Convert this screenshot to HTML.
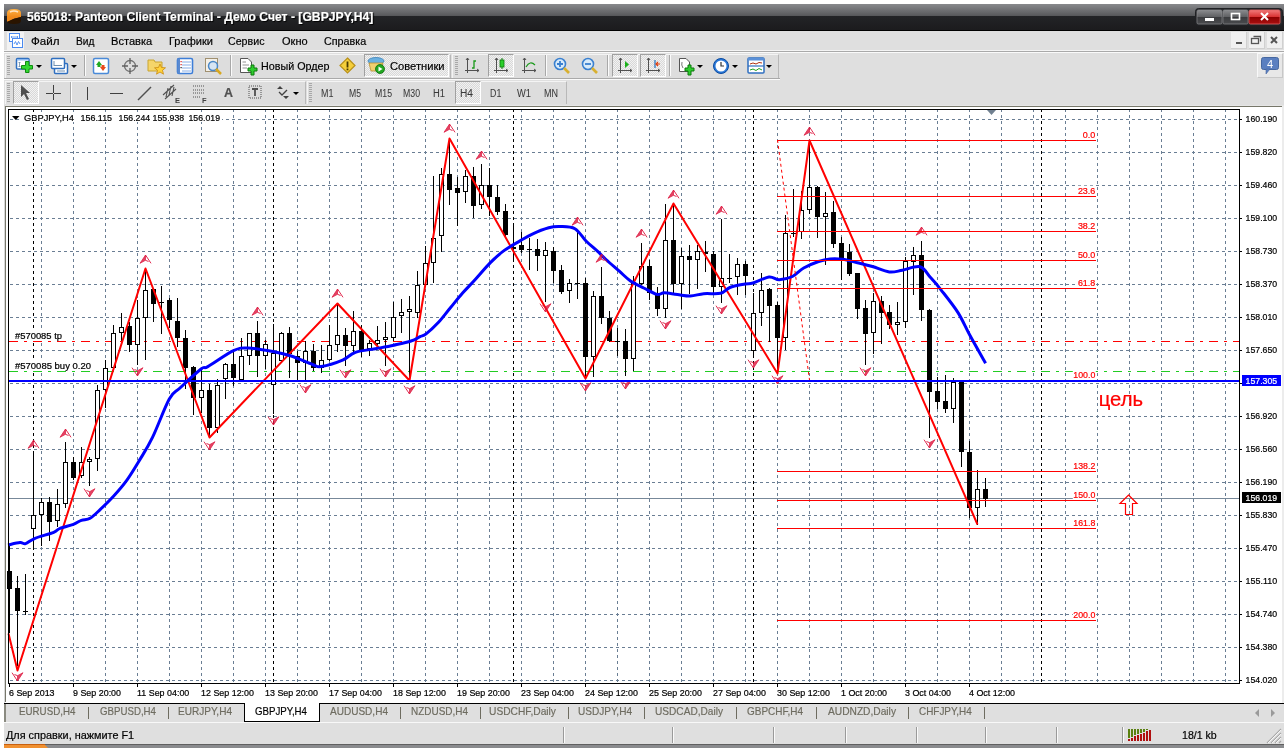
<!DOCTYPE html><html><head><meta charset="utf-8"><style>
*{margin:0;padding:0;box-sizing:border-box}
html,body{width:1288px;height:748px;overflow:hidden;background:#fff;font-family:"Liberation Sans", sans-serif;}
.a{position:absolute}
.t{position:absolute;white-space:nowrap;font-size:11px;line-height:12px;color:#000;-webkit-text-stroke:0.2px currentColor}
#w{position:absolute;left:0;top:0;width:1288px;height:748px;overflow:hidden;will-change:transform;background:#fff}
.chk{background-color:#f2f2f2;background-image:linear-gradient(45deg,#d8d8d8 25%,transparent 25%,transparent 75%,#d8d8d8 75%),linear-gradient(45deg,#d8d8d8 25%,transparent 25%,transparent 75%,#d8d8d8 75%);background-size:2px 2px;background-position:0 0,1px 1px;border-top:1px solid #a0a0a0;border-left:1px solid #a0a0a0;border-right:1px solid #fff;border-bottom:1px solid #fff}
</style></head><body><div id="w"><div class="a" style="left:4px;top:4px;width:1280px;height:27px;background:linear-gradient(to bottom,#88898c 0px,#7c7d80 3px,#5b5c5f 11px,#555659 12px,#232427 12px,#1c1c1e 25px,#1c1c1e 26px,#000 26px,#000 27px)"></div>
<svg class="a" style="left:6px;top:8px" width="17" height="17" viewBox="0 0 17 17"><defs><linearGradient id="ai" x1="0" y1="0" x2="0" y2="1"><stop offset="0" stop-color="#ffb347"/><stop offset="0.6" stop-color="#f08a1c"/></linearGradient></defs>
<path d="M1,5 Q1,1 8,1 Q15,1 15,5 L15,9 Q8,10 1,14 Z" fill="url(#ai)"/>
<path d="M1,14 Q8,10 15,9 L15,13 Q15,16 8,16 Q1,16 1,13 Z" fill="#2a1400"/>
<path d="M4,4 Q8,2 12,4" stroke="#fff" stroke-opacity="0.7" stroke-width="1.5" fill="none"/></svg>
<div class="t" style="left:27px;top:11.36px;font-size:12.8px;line-height:12.8px;color:#fff;font-weight:bold;transform:scaleX(0.9508);transform-origin:0 0;text-shadow:1px 1px 1px #000;-webkit-text-stroke:0.2px #fff">565018: Panteon Client Terminal - Демо Счет - [GBPJPY,H4]</div>
<svg class="a" style="left:1195px;top:8px" width="88" height="18" viewBox="0 0 88 18"><defs>
<linearGradient id="bg1" x1="0" y1="0" x2="0" y2="1"><stop offset="0" stop-color="#8a8b8e"/><stop offset="0.5" stop-color="#5e5f62"/><stop offset="0.5" stop-color="#3a3b3e"/><stop offset="1" stop-color="#4a4b4e"/></linearGradient>
<linearGradient id="bg2" x1="0" y1="0" x2="0" y2="1"><stop offset="0" stop-color="#f07a7a"/><stop offset="0.5" stop-color="#d83030"/><stop offset="0.5" stop-color="#8c0000"/><stop offset="1" stop-color="#a81010"/></linearGradient></defs>
<rect x="0.5" y="0.5" width="87" height="17" rx="3" fill="#2a2b2e" stroke="#202124"/>
<rect x="2" y="2" width="25" height="14" rx="1.5" fill="url(#bg1)" stroke="#909194" stroke-opacity="0.6"/>
<rect x="28" y="2" width="25" height="14" rx="1.5" fill="url(#bg1)" stroke="#909194" stroke-opacity="0.6"/>
<rect x="54" y="2" width="31" height="14" rx="1.5" fill="url(#bg2)" stroke="#e06060" stroke-opacity="0.8"/>
<rect x="10" y="10" width="9" height="3" fill="#fff"/>
<rect x="36.5" y="5.5" width="8" height="6" fill="none" stroke="#fff" stroke-width="1.6"/>
<path d="M66,5 L73,12 M73,5 L66,12" stroke="#fff" stroke-width="2"/></svg>
<div class="a" style="left:4px;top:31px;width:1280px;height:19px;background:#dfdfdf"></div>
<div class="a" style="left:4px;top:50px;width:1280px;height:1px;background:#f4f4f4"></div>
<div class="a" style="left:4px;top:51px;width:1280px;height:1px;background:#a9a9a9"></div>
<div class="a" style="left:4px;top:52px;width:1280px;height:1px;background:#fafafa"></div>
<svg class="a" style="left:7px;top:32px" width="17" height="18" viewBox="0 0 17 18"><rect x="0" y="0" width="17" height="18" fill="#f2f2f2"/>
<rect x="2.5" y="1.5" width="10" height="8" fill="#fff" stroke="#4a8af0"/>
<path d="M4,5 L11,5 M5,4 L4,5 L5,6 M10,4 L11,5 L10,6" stroke="#4a8af0" fill="none" stroke-width="0.8"/>
<rect x="5.5" y="6.5" width="10" height="9" fill="#fff" stroke="#4a8af0"/>
<path d="M7,12 L8.5,9.5 L10,13 L11.5,9.5 L13,12" stroke="#4a8af0" fill="none" stroke-width="0.9"/></svg>
<div class="t" style="left:31px;top:34.98px;font-size:11.6px;line-height:11.6px;color:#000;font-weight:normal;transform:scaleX(0.9993);transform-origin:0 0;">Файл</div>
<div class="t" style="left:75.6px;top:34.98px;font-size:11.6px;line-height:11.6px;color:#000;font-weight:normal;transform:scaleX(0.8768);transform-origin:0 0;">Вид</div>
<div class="t" style="left:110.6px;top:34.98px;font-size:11.6px;line-height:11.6px;color:#000;font-weight:normal;transform:scaleX(0.9579);transform-origin:0 0;">Вставка</div>
<div class="t" style="left:168.5px;top:34.98px;font-size:11.6px;line-height:11.6px;color:#000;font-weight:normal;transform:scaleX(0.9520);transform-origin:0 0;">Графики</div>
<div class="t" style="left:228.4px;top:34.98px;font-size:11.6px;line-height:11.6px;color:#000;font-weight:normal;transform:scaleX(0.9189);transform-origin:0 0;">Сервис</div>
<div class="t" style="left:281.5px;top:34.98px;font-size:11.6px;line-height:11.6px;color:#000;font-weight:normal;transform:scaleX(0.9497);transform-origin:0 0;">Окно</div>
<div class="t" style="left:323.8px;top:34.98px;font-size:11.6px;line-height:11.6px;color:#000;font-weight:normal;transform:scaleX(0.9296);transform-origin:0 0;">Справка</div>
<div class="a" style="left:1231px;top:32px;width:16px;height:17px;background:#f0f0f0;border-right:1px solid #d0d0d0;border-bottom:1px solid #d0d0d0"></div>
<div class="a" style="left:1249px;top:32px;width:16px;height:17px;background:#f0f0f0;border-right:1px solid #d0d0d0;border-bottom:1px solid #d0d0d0"></div>
<div class="a" style="left:1267px;top:32px;width:16px;height:17px;background:#f0f0f0;border-right:1px solid #d0d0d0;border-bottom:1px solid #d0d0d0"></div>
<svg class="a" style="left:1231px;top:32px" width="54" height="17" viewBox="0 0 54 17"><rect x="5" y="10" width="6" height="2" fill="#555"/>
<rect x="20.5" y="6.5" width="7" height="5" fill="none" stroke="#555" stroke-width="1.3"/>
<path d="M22.5,4.5 L29.5,4.5 L29.5,9.5" fill="none" stroke="#555" stroke-width="1.3"/>
<path d="M40,5 L46,11 M46,5 L40,11" stroke="#555" stroke-width="2"/></svg>
<div class="a" style="left:4px;top:53px;width:1280px;height:52px;background:#dfdfdf"></div>
<div class="a" style="left:4px;top:78px;width:776px;height:1px;background:#a9a9a9"></div>
<div class="a" style="left:4px;top:79px;width:776px;height:1px;background:#fafafa"></div>
<div class="a" style="left:4px;top:80px;width:1280px;height:25px;background:#dfdfdf"></div>
<div class="a" style="left:4px;top:105px;width:1280px;height:1px;background:#8a8a8a"></div>
<div class="a" style="left:5px;top:54px;width:446px;height:24px;background:#dddddd;border-top:1px solid #f4f4f4;border-left:1px solid #f4f4f4;border-right:1px solid #b8b8b8"></div>
<div class="a" style="left:452px;top:54px;width:327px;height:24px;background:#dddddd;border-top:1px solid #f4f4f4;border-left:1px solid #f4f4f4;border-right:1px solid #b8b8b8"></div>
<div class="a" style="left:5px;top:81px;width:301px;height:23px;background:#dddddd;border-top:1px solid #f4f4f4;border-left:1px solid #f4f4f4;border-right:1px solid #b8b8b8"></div>
<div class="a" style="left:307px;top:81px;width:260px;height:23px;background:#dddddd;border-top:1px solid #f4f4f4;border-left:1px solid #f4f4f4;border-right:1px solid #b8b8b8"></div>
<div class="a" style="left:1257px;top:53px;width:26px;height:25px;background:#e8e8e8;border:1px solid #f8f8f8;border-right-color:#c8c8c8;border-bottom-color:#c8c8c8"></div>
<svg class="a" style="left:7px;top:56px" width="3" height="20" viewBox="0 0 3 20"><rect x="0" y="0" width="3" height="1" fill="#a8a8a8"/><rect x="0" y="2" width="3" height="1" fill="#a8a8a8"/><rect x="0" y="4" width="3" height="1" fill="#a8a8a8"/><rect x="0" y="6" width="3" height="1" fill="#a8a8a8"/><rect x="0" y="8" width="3" height="1" fill="#a8a8a8"/><rect x="0" y="10" width="3" height="1" fill="#a8a8a8"/><rect x="0" y="12" width="3" height="1" fill="#a8a8a8"/><rect x="0" y="14" width="3" height="1" fill="#a8a8a8"/><rect x="0" y="16" width="3" height="1" fill="#a8a8a8"/><rect x="0" y="18" width="3" height="1" fill="#a8a8a8"/></svg>
<svg class="a" style="left:455px;top:56px" width="3" height="20" viewBox="0 0 3 20"><rect x="0" y="0" width="3" height="1" fill="#a8a8a8"/><rect x="0" y="2" width="3" height="1" fill="#a8a8a8"/><rect x="0" y="4" width="3" height="1" fill="#a8a8a8"/><rect x="0" y="6" width="3" height="1" fill="#a8a8a8"/><rect x="0" y="8" width="3" height="1" fill="#a8a8a8"/><rect x="0" y="10" width="3" height="1" fill="#a8a8a8"/><rect x="0" y="12" width="3" height="1" fill="#a8a8a8"/><rect x="0" y="14" width="3" height="1" fill="#a8a8a8"/><rect x="0" y="16" width="3" height="1" fill="#a8a8a8"/><rect x="0" y="18" width="3" height="1" fill="#a8a8a8"/></svg>
<svg class="a" style="left:7px;top:83px" width="3" height="20" viewBox="0 0 3 20"><rect x="0" y="0" width="3" height="1" fill="#a8a8a8"/><rect x="0" y="2" width="3" height="1" fill="#a8a8a8"/><rect x="0" y="4" width="3" height="1" fill="#a8a8a8"/><rect x="0" y="6" width="3" height="1" fill="#a8a8a8"/><rect x="0" y="8" width="3" height="1" fill="#a8a8a8"/><rect x="0" y="10" width="3" height="1" fill="#a8a8a8"/><rect x="0" y="12" width="3" height="1" fill="#a8a8a8"/><rect x="0" y="14" width="3" height="1" fill="#a8a8a8"/><rect x="0" y="16" width="3" height="1" fill="#a8a8a8"/><rect x="0" y="18" width="3" height="1" fill="#a8a8a8"/></svg>
<svg class="a" style="left:309px;top:83px" width="3" height="20" viewBox="0 0 3 20"><rect x="0" y="0" width="3" height="1" fill="#a8a8a8"/><rect x="0" y="2" width="3" height="1" fill="#a8a8a8"/><rect x="0" y="4" width="3" height="1" fill="#a8a8a8"/><rect x="0" y="6" width="3" height="1" fill="#a8a8a8"/><rect x="0" y="8" width="3" height="1" fill="#a8a8a8"/><rect x="0" y="10" width="3" height="1" fill="#a8a8a8"/><rect x="0" y="12" width="3" height="1" fill="#a8a8a8"/><rect x="0" y="14" width="3" height="1" fill="#a8a8a8"/><rect x="0" y="16" width="3" height="1" fill="#a8a8a8"/><rect x="0" y="18" width="3" height="1" fill="#a8a8a8"/></svg>
<div class="a" style="left:84px;top:55px;width:1px;height:21px;background:#a8a8a8"></div>
<div class="a" style="left:85px;top:55px;width:1px;height:21px;background:#fbfbfb"></div>
<div class="a" style="left:230px;top:55px;width:1px;height:21px;background:#a8a8a8"></div>
<div class="a" style="left:231px;top:55px;width:1px;height:21px;background:#fbfbfb"></div>
<div class="a" style="left:545px;top:55px;width:1px;height:21px;background:#a8a8a8"></div>
<div class="a" style="left:546px;top:55px;width:1px;height:21px;background:#fbfbfb"></div>
<div class="a" style="left:607px;top:55px;width:1px;height:21px;background:#a8a8a8"></div>
<div class="a" style="left:608px;top:55px;width:1px;height:21px;background:#fbfbfb"></div>
<div class="a" style="left:669px;top:55px;width:1px;height:21px;background:#a8a8a8"></div>
<div class="a" style="left:670px;top:55px;width:1px;height:21px;background:#fbfbfb"></div>
<div class="a" style="left:70px;top:82px;width:1px;height:21px;background:#a8a8a8"></div>
<div class="a" style="left:71px;top:82px;width:1px;height:21px;background:#fbfbfb"></div>
<div class="a" style="left:364px;top:54px;width:85px;height:23px;"></div>
<div class="a chk" style="left:364px;top:54px;width:85px;height:23px"></div>
<div class="a chk" style="left:488px;top:54px;width:26px;height:23px"></div>
<div class="a chk" style="left:612px;top:54px;width:26px;height:23px"></div>
<div class="a chk" style="left:640px;top:54px;width:26px;height:23px"></div>
<div class="a chk" style="left:13px;top:81px;width:26px;height:23px"></div>
<div class="a chk" style="left:455px;top:81px;width:26px;height:23px"></div>
<svg class="a" style="left:15px;top:57px" width="20" height="18" viewBox="0 0 20 18"><rect x="1.5" y="1.5" width="12.5" height="10.5" rx="1" fill="#fff" stroke="#2f6fc0" stroke-width="1.5"/>
<rect x="2" y="2" width="11.5" height="1.5" fill="#8ab8f0"/>
<path d="M4.5,5 L4.5,10 M3.5,6 L4.5,5 L5.5,6 M3.5,9 L4.5,10 L5.5,9" stroke="#6a8aaa" fill="none" stroke-width="0.8"/>
<path d="M10.5,4.5 L14,4.5 L14,8.5 L17.5,8.5 L17.5,12 L14,12 L14,15.5 L10.5,15.5 L10.5,12 L6.5,12 L6.5,8.5 L10.5,8.5 Z" fill="#30d830" stroke="#108a10" stroke-width="1"/></svg>
<svg class="a" style="left:36px;top:65px" width="6" height="4" viewBox="0 0 6 4"><path d="M0,0 L6,0 L3,3 Z" fill="#000"/></svg>
<svg class="a" style="left:50px;top:57px" width="20" height="18" viewBox="0 0 20 18"><rect x="4.5" y="6.5" width="13" height="10" rx="1" fill="#fff" stroke="#2f6fc0" stroke-width="1.5"/>
<rect x="1.5" y="1.5" width="13" height="10" rx="1" fill="#fff" stroke="#2f6fc0" stroke-width="1.5"/>
<path d="M4,8.5 L12,8.5 M4,4 L4,9 M7,14 L15,14" stroke="#7090b0" stroke-width="1"/></svg>
<svg class="a" style="left:71px;top:65px" width="6" height="4" viewBox="0 0 6 4"><path d="M0,0 L6,0 L3,3 Z" fill="#000"/></svg>
<svg class="a" style="left:92px;top:57px" width="18" height="18" viewBox="0 0 18 18"><rect x="1.5" y="1.5" width="15" height="15" rx="1.5" fill="#fff" stroke="#4a8ad8" stroke-width="1.5"/>
<path d="M4,8 L7,4 L10,8 L8.5,8 L8.5,10 L5.5,10 L5.5,8 Z" fill="#22aa22"/>
<path d="M8,10 L11,14 L14,10 L12.5,10 L12.5,8 L9.5,8 L9.5,10 Z" fill="#e84a1a"/></svg>
<svg class="a" style="left:121px;top:57px" width="18" height="18" viewBox="0 0 18 18"><circle cx="9" cy="9" r="5.5" fill="none" stroke="#707070" stroke-width="1.3"/>
<path d="M9,1 L9,7 M9,11 L9,17 M1,9 L7,9 M11,9 L17,9" stroke="#606060" stroke-width="1.3"/></svg>
<svg class="a" style="left:147px;top:56px" width="20" height="20" viewBox="0 0 20 20"><path d="M1,4 L7,4 L8,6 L15,6 L15,15 L1,15 Z" fill="#f5d56a" stroke="#c9a530" stroke-width="1"/>
<path d="M13,8 L14.5,11.5 L18.5,11.8 L15.5,14.3 L16.5,18.2 L13,16 L9.5,18.2 L10.5,14.3 L7.5,11.8 L11.5,11.5 Z" fill="#ffd23a" stroke="#c98a10" stroke-width="0.8"/></svg>
<svg class="a" style="left:176px;top:57px" width="18" height="18" viewBox="0 0 18 18"><rect x="1.5" y="1.5" width="15" height="15" rx="1.5" fill="#fff" stroke="#3d7ed8" stroke-width="1.6"/>
<rect x="1.5" y="1.5" width="2.5" height="15" fill="#5a8ad0"/>
<path d="M6,5 L15,5 M6,8 L15,8 M6,11 L15,11 M6,14 L15,14" stroke="#6a9ae0" stroke-width="0.8"/>
<rect x="4.5" y="4" width="1.2" height="1.2" fill="#e02020"/><rect x="4.5" y="7" width="1.2" height="1.2" fill="#e02020"/><rect x="4.5" y="10" width="1.2" height="1.2" fill="#222"/></svg>
<svg class="a" style="left:204px;top:57px" width="20" height="19" viewBox="0 0 20 19"><rect x="1.5" y="1.5" width="12" height="13" fill="#f4f0e8" stroke="#a09070" stroke-width="1"/>
<circle cx="9" cy="9" r="4.5" fill="#cfe2f5" fill-opacity="0.8" stroke="#4a88c8" stroke-width="1.5"/>
<path d="M12,12 L17,17" stroke="#d8a820" stroke-width="2.5"/></svg>
<svg class="a" style="left:239px;top:57px" width="20" height="19" viewBox="0 0 20 19"><path d="M1.5,1.5 L9,1.5 L12.5,5 L12.5,15.5 L1.5,15.5 Z" fill="#fff" stroke="#555" stroke-width="1"/>
<path d="M3.5,5 L7,5 M3.5,8 L10,8 M3.5,11 L8,11" stroke="#777" stroke-width="0.8"/>
<path d="M12,8 L15,8 L15,11 L18,11 L18,14 L15,14 L15,18 L12,18 L12,14 L9,14 L9,11 L12,11 Z" fill="#2ecc2e" stroke="#0a7a0a" stroke-width="1"/></svg>
<div class="t" style="left:260.6px;top:59.88px;font-size:11.6px;line-height:11.6px;color:#000;font-weight:normal;transform:scaleX(0.9268);transform-origin:0 0;">Новый Ордер</div>
<svg class="a" style="left:339px;top:57px" width="17" height="17" viewBox="0 0 17 17"><path d="M8.5,1 L16,8.5 L8.5,16 L1,8.5 Z" fill="#f5cf3a" stroke="#b8901a" stroke-width="1.2"/>
<rect x="7.6" y="4.5" width="1.8" height="6" fill="#4a3a00"/><rect x="7.6" y="11.5" width="1.8" height="1.8" fill="#4a3a00"/></svg>
<svg class="a" style="left:367px;top:56px" width="19" height="19" viewBox="0 0 19 19"><ellipse cx="9" cy="5" rx="8" ry="3.5" fill="#6ab0e0" stroke="#3a80b8" stroke-width="0.8"/>
<path d="M2,7 L16,7 L14,15 L4,15 Z" fill="#f0d070" stroke="#b89030" stroke-width="0.8"/>
<circle cx="13" cy="13" r="4.5" fill="#22a822" stroke="#0a6a0a" stroke-width="0.8"/>
<path d="M11.5,10.5 L15.5,13 L11.5,15.5 Z" fill="#fff"/></svg>
<div class="t" style="left:389.6px;top:59.88px;font-size:11.6px;line-height:11.6px;color:#000;font-weight:normal;transform:scaleX(0.9633);transform-origin:0 0;">Советники</div>
<svg class="a" style="left:464px;top:57px" width="16" height="17" viewBox="0 0 16 17"><path d="M3.5,1 L3.5,16 M1,13.5 L15,13.5" stroke="#505050" stroke-width="1"/><path d="M2,3 L3.5,1 L5,3 M13,12 L15,13.5 L13,15" stroke="#505050" fill="none" stroke-width="1"/><path d="M8,11 L10,11 L10,4 L12,4" stroke="#1a9a1a" fill="none" stroke-width="1.3"/></svg>
<svg class="a" style="left:493px;top:57px" width="16" height="17" viewBox="0 0 16 17"><path d="M3.5,1 L3.5,16 M1,13.5 L15,13.5" stroke="#505050" stroke-width="1"/><path d="M2,3 L3.5,1 L5,3 M13,12 L15,13.5 L13,15" stroke="#505050" fill="none" stroke-width="1"/><rect x="7" y="3" width="4" height="7" fill="#2ad02a" stroke="#0a7a0a" stroke-width="0.8"/><path d="M9,1 L9,3 M9,10 L9,12" stroke="#0a7a0a"/></svg>
<svg class="a" style="left:521px;top:57px" width="16" height="17" viewBox="0 0 16 17"><path d="M3.5,1 L3.5,16 M1,13.5 L15,13.5" stroke="#505050" stroke-width="1"/><path d="M2,3 L3.5,1 L5,3 M13,12 L15,13.5 L13,15" stroke="#505050" fill="none" stroke-width="1"/><path d="M5,10 Q9,3 14,8" stroke="#1a9a1a" fill="none" stroke-width="1.2"/></svg>
<svg class="a" style="left:553px;top:57px" width="18" height="18" viewBox="0 0 18 18"><circle cx="7" cy="7" r="5.5" fill="#d8ebfa" stroke="#3a80d0" stroke-width="1.6"/><path d="M4,7 L10,7 M7,4 L7,10" stroke="#3a80d0" stroke-width="1.8"/><path d="M11,11 L16,16" stroke="#d8b030" stroke-width="2.6"/></svg>
<svg class="a" style="left:581px;top:57px" width="18" height="18" viewBox="0 0 18 18"><circle cx="7" cy="7" r="5.5" fill="#d8ebfa" stroke="#3a80d0" stroke-width="1.6"/><path d="M4,7 L10,7" stroke="#3a80d0" stroke-width="1.8"/><path d="M11,11 L16,16" stroke="#d8b030" stroke-width="2.6"/></svg>
<svg class="a" style="left:617px;top:57px" width="16" height="17" viewBox="0 0 16 17"><path d="M3.5,1 L3.5,16 M1,13.5 L15,13.5" stroke="#505050" stroke-width="1"/><path d="M2,3 L3.5,1 L5,3 M13,12 L15,13.5 L13,15" stroke="#505050" fill="none" stroke-width="1"/><path d="M8,4 L12,7.5 L8,11 Z" fill="#1ab01a"/></svg>
<svg class="a" style="left:645px;top:57px" width="16" height="17" viewBox="0 0 16 17"><path d="M3.5,1 L3.5,16 M1,13.5 L15,13.5" stroke="#505050" stroke-width="1"/><path d="M2,3 L3.5,1 L5,3 M13,12 L15,13.5 L13,15" stroke="#505050" fill="none" stroke-width="1"/><path d="M10,3 L10,11" stroke="#2070c0" stroke-width="1.2"/><path d="M15,7 L11,7 M13,5 L11,7 L13,9" stroke="#e04010" fill="none" stroke-width="1.2"/></svg>
<svg class="a" style="left:678px;top:57px" width="18" height="19" viewBox="0 0 18 19"><path d="M1.5,1.5 L8,1.5 L11.5,5 L11.5,14.5 L1.5,14.5 Z" fill="#fff" stroke="#555" stroke-width="1"/>
<path d="M4,5 Q3,8 5,11" stroke="#555" fill="none" stroke-width="0.8"/>
<path d="M10,8 L13,8 L13,11 L16,11 L16,14 L13,14 L13,18 L10,18 L10,14 L7,14 L7,11 L10,11 Z" fill="#2ecc2e" stroke="#0a7a0a" stroke-width="1"/></svg>
<svg class="a" style="left:697px;top:65px" width="6" height="4" viewBox="0 0 6 4"><path d="M0,0 L6,0 L3,3 Z" fill="#000"/></svg>
<svg class="a" style="left:712px;top:57px" width="18" height="18" viewBox="0 0 18 18"><circle cx="9" cy="9" r="7.5" fill="#2a78d8" stroke="#0a4aa0" stroke-width="1"/><circle cx="9" cy="9" r="5.5" fill="#fff"/><path d="M9,5 L9,9 L12,9" stroke="#333" fill="none" stroke-width="1.2"/></svg>
<svg class="a" style="left:732px;top:65px" width="6" height="4" viewBox="0 0 6 4"><path d="M0,0 L6,0 L3,3 Z" fill="#000"/></svg>
<svg class="a" style="left:747px;top:57px" width="18" height="17" viewBox="0 0 18 17"><rect x="1" y="1" width="16" height="15" rx="1" fill="#fff" stroke="#2f6fc0" stroke-width="1.5"/><rect x="1" y="1" width="16" height="2.5" fill="#5a90d8"/><path d="M1,9 L17,9" stroke="#2f6fc0" stroke-width="1.2"/>
<path d="M3,7 L6,6 L9,7 L12,5.5 L15,6" stroke="#b03010" fill="none" stroke-width="1"/><path d="M3,13 L6,12 L9,13.5 L12,11.5 L15,13" stroke="#20a020" fill="none" stroke-width="1"/></svg>
<svg class="a" style="left:766px;top:65px" width="6" height="4" viewBox="0 0 6 4"><path d="M0,0 L6,0 L3,3 Z" fill="#000"/></svg>
<svg class="a" style="left:1260px;top:56px" width="20" height="20" viewBox="0 0 20 20"><rect x="1.5" y="1.5" width="17" height="12" rx="2" fill="#5a7fc0" stroke="#46679f"/><path d="M6,13 L6,18 L10,13 Z" fill="#5a7fc0" stroke="#46679f" stroke-width="0.6"/>
<text x="10" y="12" font-family="Liberation Sans" font-size="11" fill="#fff" text-anchor="middle">4</text></svg>
<svg class="a" style="left:18px;top:84px" width="16" height="17" viewBox="0 0 16 17"><path d="M3,1 L3,13 L6,10 L9,16 L11,15 L8,9 L12,9 Z" fill="#505050"/></svg>
<svg class="a" style="left:45px;top:85px" width="17" height="16" viewBox="0 0 17 16"><path d="M8.5,0 L8.5,15 M1,8.5 L16,8.5" stroke="#404040" stroke-width="1"/><rect x="8" y="8" width="1" height="1" fill="#dfdfdf"/></svg>
<div class="a" style="left:87px;top:87px;width:1px;height:13px;background:#404040"></div>
<div class="a" style="left:110px;top:93px;width:13px;height:1px;background:#404040"></div>
<svg class="a" style="left:137px;top:86px" width="15" height="15" viewBox="0 0 15 15"><path d="M1,14 L14,1" stroke="#505050" stroke-width="1.4"/></svg>
<svg class="a" style="left:162px;top:84px" width="20" height="19" viewBox="0 0 20 19"><path d="M1,11 L12,1 M3,15 L14,5 M6,4 L4,13 M9,2 L7,11 M12,3 L10,12" stroke="#505050" stroke-width="1.1"/>
<text x="13" y="18.5" font-family="Liberation Sans" font-size="7.5" font-weight="bold" fill="#404040">E</text></svg>
<svg class="a" style="left:192px;top:84px" width="18" height="19" viewBox="0 0 18 19"><path d="M1,2 L13,2 M1,6 L13,6 M1,9 L13,9 M1,13 L9,13" stroke="#505050" stroke-width="1" stroke-dasharray="1 1"/>
<text x="10" y="18.5" font-family="Liberation Sans" font-size="7.5" font-weight="bold" fill="#404040">F</text></svg>
<div class="t" style="left:224px;top:86.84px;font-size:12px;line-height:12px;color:#505050;font-weight:bold;transform:scaleX(1.0385);transform-origin:0 0;">A</div>
<svg class="a" style="left:248px;top:85px" width="15" height="15" viewBox="0 0 15 15"><rect x="1" y="1" width="12" height="12" fill="none" stroke="#505050" stroke-dasharray="1 1"/><path d="M4,4 L10,4 M7,4 L7,11" stroke="#505050" stroke-width="1.8"/></svg>
<svg class="a" style="left:276px;top:86px" width="16" height="14" viewBox="0 0 16 14"><path d="M4,0 L7,3 L1,3 Z M10,13 L13,10 L7,10 Z" fill="#404040"/><path d="M3,6 L6,9 L11,4" stroke="#404040" fill="none" stroke-width="1.3"/></svg>
<svg class="a" style="left:293px;top:92px" width="6" height="4" viewBox="0 0 6 4"><path d="M0,0 L6,0 L3,3 Z" fill="#000"/></svg>
<div class="t" style="left:320.6px;top:88.53px;font-size:10px;line-height:10px;color:#3a3a3a;font-weight:normal;transform:scaleX(0.8926);transform-origin:0 0;-webkit-text-stroke:0.05px #3a3a3a">M1</div>
<div class="t" style="left:349px;top:88.53px;font-size:10px;line-height:10px;color:#3a3a3a;font-weight:normal;transform:scaleX(0.8638);transform-origin:0 0;-webkit-text-stroke:0.05px #3a3a3a">M5</div>
<div class="t" style="left:375px;top:88.53px;font-size:10px;line-height:10px;color:#3a3a3a;font-weight:normal;transform:scaleX(0.8739);transform-origin:0 0;-webkit-text-stroke:0.05px #3a3a3a">M15</div>
<div class="t" style="left:403px;top:88.53px;font-size:10px;line-height:10px;color:#3a3a3a;font-weight:normal;transform:scaleX(0.8739);transform-origin:0 0;-webkit-text-stroke:0.05px #3a3a3a">M30</div>
<div class="t" style="left:433px;top:88.53px;font-size:10px;line-height:10px;color:#3a3a3a;font-weight:normal;transform:scaleX(0.9387);transform-origin:0 0;-webkit-text-stroke:0.05px #3a3a3a">H1</div>
<div class="t" style="left:460px;top:88.53px;font-size:10px;line-height:10px;color:#3a3a3a;font-weight:normal;transform:scaleX(1.0170);transform-origin:0 0;-webkit-text-stroke:0.05px #3a3a3a">H4</div>
<div class="t" style="left:489.7px;top:88.53px;font-size:10px;line-height:10px;color:#3a3a3a;font-weight:normal;transform:scaleX(0.8840);transform-origin:0 0;-webkit-text-stroke:0.05px #3a3a3a">D1</div>
<div class="t" style="left:517px;top:88.53px;font-size:10px;line-height:10px;color:#3a3a3a;font-weight:normal;transform:scaleX(0.9333);transform-origin:0 0;-webkit-text-stroke:0.05px #3a3a3a">W1</div>
<div class="t" style="left:544px;top:88.53px;font-size:10px;line-height:10px;color:#3a3a3a;font-weight:normal;transform:scaleX(0.9002);transform-origin:0 0;-webkit-text-stroke:0.05px #3a3a3a">MN</div>
<div class="a" style="left:4px;top:105px;width:1280px;height:598px;background:#fff"></div>
<div class="a" style="left:4px;top:105px;width:1280px;height:1px;background:#e6e6e6"></div>
<div class="a" style="left:4px;top:106px;width:1279px;height:1px;background:#77776a"></div>
<div class="a" style="left:4px;top:105px;width:1px;height:598px;background:#d8d8d8"></div>
<div class="a" style="left:5px;top:106px;width:1px;height:596px;background:#77776a"></div>
<div class="a" style="left:1282px;top:106px;width:2px;height:597px;background:#ececec"></div>
<svg class="a" style="left:0px;top:0px" width="1288" height="748" viewBox="0 0 1288 748"><g font-family="Liberation Sans"><line x1="41.5" y1="109" x2="41.5" y2="683" stroke="#6a7e94" stroke-dasharray="3 3"/><line x1="73.5" y1="109" x2="73.5" y2="683" stroke="#6a7e94" stroke-dasharray="3 3"/><line x1="105.5" y1="109" x2="105.5" y2="683" stroke="#6a7e94" stroke-dasharray="3 3"/><line x1="137.5" y1="109" x2="137.5" y2="683" stroke="#6a7e94" stroke-dasharray="3 3"/><line x1="169.5" y1="109" x2="169.5" y2="683" stroke="#6a7e94" stroke-dasharray="3 3"/><line x1="201.5" y1="109" x2="201.5" y2="683" stroke="#6a7e94" stroke-dasharray="3 3"/><line x1="233.5" y1="109" x2="233.5" y2="683" stroke="#6a7e94" stroke-dasharray="3 3"/><line x1="265.5" y1="109" x2="265.5" y2="683" stroke="#6a7e94" stroke-dasharray="3 3"/><line x1="297.5" y1="109" x2="297.5" y2="683" stroke="#6a7e94" stroke-dasharray="3 3"/><line x1="329.5" y1="109" x2="329.5" y2="683" stroke="#6a7e94" stroke-dasharray="3 3"/><line x1="361.5" y1="109" x2="361.5" y2="683" stroke="#6a7e94" stroke-dasharray="3 3"/><line x1="393.5" y1="109" x2="393.5" y2="683" stroke="#6a7e94" stroke-dasharray="3 3"/><line x1="425.5" y1="109" x2="425.5" y2="683" stroke="#6a7e94" stroke-dasharray="3 3"/><line x1="457.5" y1="109" x2="457.5" y2="683" stroke="#6a7e94" stroke-dasharray="3 3"/><line x1="489.5" y1="109" x2="489.5" y2="683" stroke="#6a7e94" stroke-dasharray="3 3"/><line x1="521.5" y1="109" x2="521.5" y2="683" stroke="#6a7e94" stroke-dasharray="3 3"/><line x1="553.5" y1="109" x2="553.5" y2="683" stroke="#6a7e94" stroke-dasharray="3 3"/><line x1="585.5" y1="109" x2="585.5" y2="683" stroke="#6a7e94" stroke-dasharray="3 3"/><line x1="617.5" y1="109" x2="617.5" y2="683" stroke="#6a7e94" stroke-dasharray="3 3"/><line x1="649.5" y1="109" x2="649.5" y2="683" stroke="#6a7e94" stroke-dasharray="3 3"/><line x1="681.5" y1="109" x2="681.5" y2="683" stroke="#6a7e94" stroke-dasharray="3 3"/><line x1="713.5" y1="109" x2="713.5" y2="683" stroke="#6a7e94" stroke-dasharray="3 3"/><line x1="745.5" y1="109" x2="745.5" y2="683" stroke="#6a7e94" stroke-dasharray="3 3"/><line x1="777.5" y1="109" x2="777.5" y2="683" stroke="#6a7e94" stroke-dasharray="3 3"/><line x1="809.5" y1="109" x2="809.5" y2="683" stroke="#6a7e94" stroke-dasharray="3 3"/><line x1="841.5" y1="109" x2="841.5" y2="683" stroke="#6a7e94" stroke-dasharray="3 3"/><line x1="873.5" y1="109" x2="873.5" y2="683" stroke="#6a7e94" stroke-dasharray="3 3"/><line x1="905.5" y1="109" x2="905.5" y2="683" stroke="#6a7e94" stroke-dasharray="3 3"/><line x1="937.5" y1="109" x2="937.5" y2="683" stroke="#6a7e94" stroke-dasharray="3 3"/><line x1="969.5" y1="109" x2="969.5" y2="683" stroke="#6a7e94" stroke-dasharray="3 3"/><line x1="1001.5" y1="109" x2="1001.5" y2="683" stroke="#6a7e94" stroke-dasharray="3 3"/><line x1="1033.5" y1="109" x2="1033.5" y2="683" stroke="#6a7e94" stroke-dasharray="3 3"/><line x1="1065.5" y1="109" x2="1065.5" y2="683" stroke="#6a7e94" stroke-dasharray="3 3"/><line x1="1097.5" y1="109" x2="1097.5" y2="683" stroke="#6a7e94" stroke-dasharray="3 3"/><line x1="1129.5" y1="109" x2="1129.5" y2="683" stroke="#6a7e94" stroke-dasharray="3 3"/><line x1="1161.5" y1="109" x2="1161.5" y2="683" stroke="#6a7e94" stroke-dasharray="3 3"/><line x1="1193.5" y1="109" x2="1193.5" y2="683" stroke="#6a7e94" stroke-dasharray="3 3"/><line x1="1225.5" y1="109" x2="1225.5" y2="683" stroke="#6a7e94" stroke-dasharray="3 3"/><line x1="10" y1="119.5" x2="1239" y2="119.5" stroke="#6a7e94" stroke-dasharray="3 3"/><line x1="10" y1="152.5" x2="1239" y2="152.5" stroke="#6a7e94" stroke-dasharray="3 3"/><line x1="10" y1="185.5" x2="1239" y2="185.5" stroke="#6a7e94" stroke-dasharray="3 3"/><line x1="10" y1="218.5" x2="1239" y2="218.5" stroke="#6a7e94" stroke-dasharray="3 3"/><line x1="10" y1="251.5" x2="1239" y2="251.5" stroke="#6a7e94" stroke-dasharray="3 3"/><line x1="10" y1="284.5" x2="1239" y2="284.5" stroke="#6a7e94" stroke-dasharray="3 3"/><line x1="10" y1="317.5" x2="1239" y2="317.5" stroke="#6a7e94" stroke-dasharray="3 3"/><line x1="10" y1="350.5" x2="1239" y2="350.5" stroke="#6a7e94" stroke-dasharray="3 3"/><line x1="10" y1="383.5" x2="1239" y2="383.5" stroke="#6a7e94" stroke-dasharray="3 3"/><line x1="10" y1="416.5" x2="1239" y2="416.5" stroke="#6a7e94" stroke-dasharray="3 3"/><line x1="10" y1="449.5" x2="1239" y2="449.5" stroke="#6a7e94" stroke-dasharray="3 3"/><line x1="10" y1="482.5" x2="1239" y2="482.5" stroke="#6a7e94" stroke-dasharray="3 3"/><line x1="10" y1="515.5" x2="1239" y2="515.5" stroke="#6a7e94" stroke-dasharray="3 3"/><line x1="10" y1="548.5" x2="1239" y2="548.5" stroke="#6a7e94" stroke-dasharray="3 3"/><line x1="10" y1="581.5" x2="1239" y2="581.5" stroke="#6a7e94" stroke-dasharray="3 3"/><line x1="10" y1="614.5" x2="1239" y2="614.5" stroke="#6a7e94" stroke-dasharray="3 3"/><line x1="10" y1="647.5" x2="1239" y2="647.5" stroke="#6a7e94" stroke-dasharray="3 3"/><line x1="10" y1="680.5" x2="1239" y2="680.5" stroke="#6a7e94" stroke-dasharray="3 3"/><line x1="33.5" y1="109" x2="33.5" y2="683" stroke="#000" stroke-dasharray="3 3"/><line x1="273.5" y1="109" x2="273.5" y2="683" stroke="#000" stroke-dasharray="3 3"/><line x1="513.5" y1="109" x2="513.5" y2="683" stroke="#000" stroke-dasharray="3 3"/><line x1="753.5" y1="109" x2="753.5" y2="683" stroke="#000" stroke-dasharray="3 3"/><line x1="1041.5" y1="109" x2="1041.5" y2="683" stroke="#000" stroke-dasharray="3 3"/><line x1="9" y1="498.5" x2="1239" y2="498.5" stroke="#778899"/><line x1="9" y1="341.5" x2="1239" y2="341.5" stroke="#ff0000" stroke-dasharray="9 6 3 6"/><line x1="9" y1="371.5" x2="1239" y2="371.5" stroke="#22cc22" stroke-dasharray="9 6 3 6"/><line x1="9.5" y1="545" x2="9.5" y2="633" stroke="#000"/><rect x="7.5" y="571.5" width="4" height="17" fill="#000" stroke="#000"/><line x1="17.5" y1="576" x2="17.5" y2="666" stroke="#000"/><rect x="15.5" y="588.5" width="4" height="22" fill="#000" stroke="#000"/><line x1="25.5" y1="574" x2="25.5" y2="615" stroke="#000"/><line x1="23" y1="611.5" x2="28" y2="611.5" stroke="#000"/><line x1="33.5" y1="451" x2="33.5" y2="547" stroke="#000"/><rect x="31.5" y="515.5" width="4" height="13" fill="#fff" stroke="#000"/><line x1="41.5" y1="498" x2="41.5" y2="546" stroke="#000"/><rect x="39.5" y="502.5" width="4" height="12" fill="#fff" stroke="#000"/><line x1="49.5" y1="497" x2="49.5" y2="541" stroke="#000"/><rect x="47.5" y="502.5" width="4" height="19" fill="#000" stroke="#000"/><line x1="57.5" y1="489" x2="57.5" y2="527" stroke="#000"/><rect x="55.5" y="504.5" width="4" height="16" fill="#fff" stroke="#000"/><line x1="65.5" y1="442" x2="65.5" y2="508" stroke="#000"/><rect x="63.5" y="462.5" width="4" height="41" fill="#fff" stroke="#000"/><line x1="73.5" y1="457" x2="73.5" y2="480" stroke="#000"/><rect x="71.5" y="462.5" width="4" height="15" fill="#000" stroke="#000"/><line x1="81.5" y1="447" x2="81.5" y2="478" stroke="#000"/><rect x="79.5" y="462.5" width="4" height="13" fill="#fff" stroke="#000"/><line x1="89.5" y1="457" x2="89.5" y2="486" stroke="#000"/><rect x="87.5" y="459.5" width="4" height="2" fill="#fff" stroke="#000"/><line x1="97.5" y1="385" x2="97.5" y2="471" stroke="#000"/><rect x="95.5" y="390.5" width="4" height="68" fill="#fff" stroke="#000"/><line x1="105.5" y1="360" x2="105.5" y2="408" stroke="#000"/><rect x="103.5" y="368.5" width="4" height="21" fill="#fff" stroke="#000"/><line x1="113.5" y1="325" x2="113.5" y2="370" stroke="#000"/><rect x="111.5" y="333.5" width="4" height="34" fill="#fff" stroke="#000"/><line x1="121.5" y1="313" x2="121.5" y2="341" stroke="#000"/><rect x="119.5" y="327.5" width="4" height="5" fill="#fff" stroke="#000"/><line x1="129.5" y1="322" x2="129.5" y2="352" stroke="#000"/><rect x="127.5" y="326.5" width="4" height="18" fill="#000" stroke="#000"/><line x1="137.5" y1="300" x2="137.5" y2="365" stroke="#000"/><rect x="135.5" y="318.5" width="4" height="26" fill="#fff" stroke="#000"/><line x1="145.5" y1="269" x2="145.5" y2="360" stroke="#000"/><rect x="143.5" y="290.5" width="4" height="27" fill="#fff" stroke="#000"/><line x1="153.5" y1="288" x2="153.5" y2="322" stroke="#000"/><rect x="151.5" y="289.5" width="4" height="14" fill="#000" stroke="#000"/><line x1="161.5" y1="286" x2="161.5" y2="334" stroke="#000"/><line x1="159" y1="302.5" x2="164" y2="302.5" stroke="#000"/><line x1="169.5" y1="298" x2="169.5" y2="328" stroke="#000"/><rect x="167.5" y="300.5" width="4" height="19" fill="#000" stroke="#000"/><line x1="177.5" y1="298" x2="177.5" y2="347" stroke="#000"/><rect x="175.5" y="321.5" width="4" height="16" fill="#000" stroke="#000"/><line x1="185.5" y1="330" x2="185.5" y2="389" stroke="#000"/><rect x="183.5" y="338.5" width="4" height="29" fill="#000" stroke="#000"/><line x1="193.5" y1="366" x2="193.5" y2="415" stroke="#000"/><rect x="191.5" y="367.5" width="4" height="30" fill="#000" stroke="#000"/><line x1="201.5" y1="370" x2="201.5" y2="413" stroke="#000"/><rect x="199.5" y="390.5" width="4" height="7" fill="#fff" stroke="#000"/><line x1="209.5" y1="384" x2="209.5" y2="438" stroke="#000"/><rect x="207.5" y="390.5" width="4" height="37" fill="#000" stroke="#000"/><line x1="217.5" y1="379" x2="217.5" y2="433" stroke="#000"/><rect x="215.5" y="385.5" width="4" height="42" fill="#fff" stroke="#000"/><line x1="225.5" y1="363" x2="225.5" y2="399" stroke="#000"/><rect x="223.5" y="364.5" width="4" height="14" fill="#fff" stroke="#000"/><line x1="233.5" y1="350" x2="233.5" y2="386" stroke="#000"/><rect x="231.5" y="364.5" width="4" height="13" fill="#000" stroke="#000"/><line x1="241.5" y1="338" x2="241.5" y2="381" stroke="#000"/><rect x="239.5" y="356.5" width="4" height="23" fill="#fff" stroke="#000"/><line x1="249.5" y1="333" x2="249.5" y2="365" stroke="#000"/><rect x="247.5" y="333.5" width="4" height="22" fill="#fff" stroke="#000"/><line x1="257.5" y1="321" x2="257.5" y2="377" stroke="#000"/><rect x="255.5" y="333.5" width="4" height="22" fill="#000" stroke="#000"/><line x1="265.5" y1="340" x2="265.5" y2="369" stroke="#000"/><rect x="263.5" y="344.5" width="4" height="11" fill="#fff" stroke="#000"/><line x1="273.5" y1="324" x2="273.5" y2="414" stroke="#000"/><rect x="271.5" y="353.5" width="4" height="31" fill="#fff" stroke="#000"/><line x1="281.5" y1="332" x2="281.5" y2="362" stroke="#000"/><rect x="279.5" y="333.5" width="4" height="27" fill="#fff" stroke="#000"/><line x1="289.5" y1="327" x2="289.5" y2="378" stroke="#000"/><rect x="287.5" y="333.5" width="4" height="20" fill="#000" stroke="#000"/><line x1="297.5" y1="351" x2="297.5" y2="380" stroke="#000"/><rect x="295.5" y="356.5" width="4" height="6" fill="#000" stroke="#000"/><line x1="305.5" y1="341" x2="305.5" y2="381" stroke="#000"/><rect x="303.5" y="351.5" width="4" height="11" fill="#fff" stroke="#000"/><line x1="313.5" y1="344" x2="313.5" y2="371" stroke="#000"/><rect x="311.5" y="351.5" width="4" height="16" fill="#000" stroke="#000"/><line x1="321.5" y1="345" x2="321.5" y2="373" stroke="#000"/><rect x="319.5" y="360.5" width="4" height="7" fill="#fff" stroke="#000"/><line x1="329.5" y1="325" x2="329.5" y2="361" stroke="#000"/><rect x="327.5" y="345.5" width="4" height="14" fill="#fff" stroke="#000"/><line x1="337.5" y1="303" x2="337.5" y2="352" stroke="#000"/><rect x="335.5" y="335.5" width="4" height="9" fill="#fff" stroke="#000"/><line x1="345.5" y1="328" x2="345.5" y2="366" stroke="#000"/><rect x="343.5" y="335.5" width="4" height="10" fill="#000" stroke="#000"/><line x1="353.5" y1="311" x2="353.5" y2="352" stroke="#000"/><rect x="351.5" y="331.5" width="4" height="14" fill="#fff" stroke="#000"/><line x1="361.5" y1="325" x2="361.5" y2="357" stroke="#000"/><rect x="359.5" y="331.5" width="4" height="18" fill="#000" stroke="#000"/><line x1="369.5" y1="340" x2="369.5" y2="356" stroke="#000"/><rect x="367.5" y="343.5" width="4" height="5" fill="#fff" stroke="#000"/><line x1="377.5" y1="326" x2="377.5" y2="345" stroke="#000"/><rect x="375.5" y="340.5" width="4" height="3" fill="#fff" stroke="#000"/><line x1="385.5" y1="322" x2="385.5" y2="366" stroke="#000"/><rect x="383.5" y="337.5" width="4" height="2" fill="#fff" stroke="#000"/><line x1="393.5" y1="302" x2="393.5" y2="341" stroke="#000"/><rect x="391.5" y="317.5" width="4" height="20" fill="#fff" stroke="#000"/><line x1="401.5" y1="299" x2="401.5" y2="333" stroke="#000"/><rect x="399.5" y="312.5" width="4" height="3" fill="#fff" stroke="#000"/><line x1="409.5" y1="296" x2="409.5" y2="381" stroke="#000"/><rect x="407.5" y="309.5" width="4" height="2" fill="#fff" stroke="#000"/><line x1="417.5" y1="271" x2="417.5" y2="318" stroke="#000"/><rect x="415.5" y="285.5" width="4" height="27" fill="#fff" stroke="#000"/><line x1="425.5" y1="246" x2="425.5" y2="287" stroke="#000"/><rect x="423.5" y="263.5" width="4" height="21" fill="#fff" stroke="#000"/><line x1="433.5" y1="176" x2="433.5" y2="283" stroke="#000"/><rect x="431.5" y="238.5" width="4" height="24" fill="#fff" stroke="#000"/><line x1="441.5" y1="168" x2="441.5" y2="252" stroke="#000"/><rect x="439.5" y="174.5" width="4" height="61" fill="#fff" stroke="#000"/><line x1="449.5" y1="139" x2="449.5" y2="205" stroke="#000"/><rect x="447.5" y="174.5" width="4" height="15" fill="#000" stroke="#000"/><line x1="457.5" y1="177" x2="457.5" y2="226" stroke="#000"/><rect x="455.5" y="188.5" width="4" height="4" fill="#000" stroke="#000"/><line x1="465.5" y1="170" x2="465.5" y2="203" stroke="#000"/><rect x="463.5" y="176.5" width="4" height="15" fill="#fff" stroke="#000"/><line x1="473.5" y1="167" x2="473.5" y2="218" stroke="#000"/><rect x="471.5" y="176.5" width="4" height="29" fill="#000" stroke="#000"/><line x1="481.5" y1="164" x2="481.5" y2="209" stroke="#000"/><rect x="479.5" y="185.5" width="4" height="19" fill="#fff" stroke="#000"/><line x1="489.5" y1="168" x2="489.5" y2="216" stroke="#000"/><rect x="487.5" y="185.5" width="4" height="11" fill="#000" stroke="#000"/><line x1="497.5" y1="185" x2="497.5" y2="215" stroke="#000"/><rect x="495.5" y="197.5" width="4" height="14" fill="#000" stroke="#000"/><line x1="505.5" y1="204" x2="505.5" y2="237" stroke="#000"/><rect x="503.5" y="211.5" width="4" height="23" fill="#000" stroke="#000"/><line x1="513.5" y1="223" x2="513.5" y2="262" stroke="#000"/><rect x="511.5" y="247.5" width="4" height="1" fill="#000" stroke="#000"/><line x1="521.5" y1="232" x2="521.5" y2="253" stroke="#000"/><rect x="519.5" y="245.5" width="4" height="4" fill="#000" stroke="#000"/><line x1="529.5" y1="238" x2="529.5" y2="270" stroke="#000"/><line x1="527" y1="249.5" x2="532" y2="249.5" stroke="#000"/><line x1="537.5" y1="239" x2="537.5" y2="271" stroke="#000"/><rect x="535.5" y="249.5" width="4" height="6" fill="#000" stroke="#000"/><line x1="545.5" y1="242" x2="545.5" y2="302" stroke="#000"/><rect x="543.5" y="250.5" width="4" height="5" fill="#fff" stroke="#000"/><line x1="553.5" y1="247" x2="553.5" y2="283" stroke="#000"/><rect x="551.5" y="251.5" width="4" height="19" fill="#000" stroke="#000"/><line x1="561.5" y1="265" x2="561.5" y2="294" stroke="#000"/><rect x="559.5" y="270.5" width="4" height="21" fill="#000" stroke="#000"/><line x1="569.5" y1="279" x2="569.5" y2="303" stroke="#000"/><rect x="567.5" y="283.5" width="4" height="7" fill="#fff" stroke="#000"/><line x1="577.5" y1="232" x2="577.5" y2="299" stroke="#000"/><line x1="575" y1="283.5" x2="580" y2="283.5" stroke="#000"/><line x1="585.5" y1="278" x2="585.5" y2="379" stroke="#000"/><rect x="583.5" y="283.5" width="4" height="73" fill="#000" stroke="#000"/><line x1="593.5" y1="291" x2="593.5" y2="377" stroke="#000"/><rect x="591.5" y="296.5" width="4" height="60" fill="#fff" stroke="#000"/><line x1="601.5" y1="267" x2="601.5" y2="324" stroke="#000"/><rect x="599.5" y="296.5" width="4" height="21" fill="#000" stroke="#000"/><line x1="609.5" y1="311" x2="609.5" y2="342" stroke="#000"/><rect x="607.5" y="318.5" width="4" height="22" fill="#000" stroke="#000"/><line x1="617.5" y1="328" x2="617.5" y2="356" stroke="#000"/><line x1="615" y1="341.5" x2="620" y2="341.5" stroke="#000"/><line x1="625.5" y1="329" x2="625.5" y2="376" stroke="#000"/><rect x="623.5" y="341.5" width="4" height="17" fill="#000" stroke="#000"/><line x1="633.5" y1="276" x2="633.5" y2="371" stroke="#000"/><rect x="631.5" y="282.5" width="4" height="76" fill="#fff" stroke="#000"/><line x1="641.5" y1="243" x2="641.5" y2="285" stroke="#000"/><rect x="639.5" y="266.5" width="4" height="17" fill="#fff" stroke="#000"/><line x1="649.5" y1="260" x2="649.5" y2="300" stroke="#000"/><rect x="647.5" y="266.5" width="4" height="26" fill="#000" stroke="#000"/><line x1="657.5" y1="287" x2="657.5" y2="316" stroke="#000"/><rect x="655.5" y="293.5" width="4" height="15" fill="#000" stroke="#000"/><line x1="665.5" y1="204" x2="665.5" y2="318" stroke="#000"/><rect x="663.5" y="240.5" width="4" height="68" fill="#fff" stroke="#000"/><line x1="673.5" y1="203" x2="673.5" y2="293" stroke="#000"/><rect x="671.5" y="240.5" width="4" height="43" fill="#000" stroke="#000"/><line x1="681.5" y1="248" x2="681.5" y2="309" stroke="#000"/><rect x="679.5" y="256.5" width="4" height="27" fill="#fff" stroke="#000"/><line x1="689.5" y1="245" x2="689.5" y2="294" stroke="#000"/><rect x="687.5" y="256.5" width="4" height="3" fill="#000" stroke="#000"/><line x1="697.5" y1="245" x2="697.5" y2="289" stroke="#000"/><rect x="695.5" y="251.5" width="4" height="8" fill="#fff" stroke="#000"/><line x1="705.5" y1="241" x2="705.5" y2="272" stroke="#000"/><rect x="703.5" y="252.5" width="4" height="1" fill="#000" stroke="#000"/><line x1="713.5" y1="251" x2="713.5" y2="294" stroke="#000"/><rect x="711.5" y="254.5" width="4" height="32" fill="#000" stroke="#000"/><line x1="721.5" y1="219" x2="721.5" y2="303" stroke="#000"/><rect x="719.5" y="278.5" width="4" height="8" fill="#fff" stroke="#000"/><line x1="729.5" y1="254" x2="729.5" y2="283" stroke="#000"/><line x1="727" y1="278.5" x2="732" y2="278.5" stroke="#000"/><line x1="737.5" y1="258" x2="737.5" y2="295" stroke="#000"/><rect x="735.5" y="264.5" width="4" height="12" fill="#fff" stroke="#000"/><line x1="745.5" y1="261" x2="745.5" y2="295" stroke="#000"/><rect x="743.5" y="264.5" width="4" height="11" fill="#000" stroke="#000"/><line x1="753.5" y1="293" x2="753.5" y2="358" stroke="#000"/><rect x="751.5" y="313.5" width="4" height="37" fill="#fff" stroke="#000"/><line x1="761.5" y1="273" x2="761.5" y2="326" stroke="#000"/><rect x="759.5" y="290.5" width="4" height="22" fill="#fff" stroke="#000"/><line x1="769.5" y1="288" x2="769.5" y2="342" stroke="#000"/><rect x="767.5" y="289.5" width="4" height="16" fill="#000" stroke="#000"/><line x1="777.5" y1="302" x2="777.5" y2="374" stroke="#000"/><rect x="775.5" y="305.5" width="4" height="32" fill="#000" stroke="#000"/><line x1="785.5" y1="215" x2="785.5" y2="350" stroke="#000"/><rect x="783.5" y="233.5" width="4" height="104" fill="#fff" stroke="#000"/><line x1="793.5" y1="189" x2="793.5" y2="237" stroke="#000"/><line x1="791" y1="233.5" x2="796" y2="233.5" stroke="#000"/><line x1="801.5" y1="191" x2="801.5" y2="239" stroke="#000"/><rect x="799.5" y="210.5" width="4" height="21" fill="#fff" stroke="#000"/><line x1="809.5" y1="141" x2="809.5" y2="214" stroke="#000"/><rect x="807.5" y="187.5" width="4" height="22" fill="#fff" stroke="#000"/><line x1="817.5" y1="186" x2="817.5" y2="238" stroke="#000"/><rect x="815.5" y="187.5" width="4" height="29" fill="#000" stroke="#000"/><line x1="825.5" y1="192" x2="825.5" y2="265" stroke="#000"/><rect x="823.5" y="213.5" width="4" height="3" fill="#fff" stroke="#000"/><line x1="833.5" y1="201" x2="833.5" y2="248" stroke="#000"/><rect x="831.5" y="212.5" width="4" height="31" fill="#000" stroke="#000"/><line x1="841.5" y1="237" x2="841.5" y2="280" stroke="#000"/><rect x="839.5" y="243.5" width="4" height="15" fill="#000" stroke="#000"/><line x1="849.5" y1="244" x2="849.5" y2="276" stroke="#000"/><rect x="847.5" y="252.5" width="4" height="21" fill="#000" stroke="#000"/><line x1="857.5" y1="273" x2="857.5" y2="319" stroke="#000"/><rect x="855.5" y="273.5" width="4" height="35" fill="#000" stroke="#000"/><line x1="865.5" y1="300" x2="865.5" y2="365" stroke="#000"/><rect x="863.5" y="308.5" width="4" height="25" fill="#000" stroke="#000"/><line x1="873.5" y1="293" x2="873.5" y2="354" stroke="#000"/><rect x="871.5" y="301.5" width="4" height="31" fill="#fff" stroke="#000"/><line x1="881.5" y1="296" x2="881.5" y2="344" stroke="#000"/><rect x="879.5" y="301.5" width="4" height="11" fill="#000" stroke="#000"/><line x1="889.5" y1="305" x2="889.5" y2="329" stroke="#000"/><rect x="887.5" y="312.5" width="4" height="12" fill="#000" stroke="#000"/><line x1="897.5" y1="302" x2="897.5" y2="335" stroke="#000"/><rect x="895.5" y="322.5" width="4" height="2" fill="#fff" stroke="#000"/><line x1="905.5" y1="257" x2="905.5" y2="328" stroke="#000"/><rect x="903.5" y="261.5" width="4" height="60" fill="#fff" stroke="#000"/><line x1="913.5" y1="247" x2="913.5" y2="295" stroke="#000"/><rect x="911.5" y="255.5" width="4" height="6" fill="#fff" stroke="#000"/><line x1="921.5" y1="241" x2="921.5" y2="321" stroke="#000"/><rect x="919.5" y="255.5" width="4" height="54" fill="#000" stroke="#000"/><line x1="929.5" y1="309" x2="929.5" y2="438" stroke="#000"/><rect x="927.5" y="310.5" width="4" height="81" fill="#000" stroke="#000"/><line x1="937.5" y1="377" x2="937.5" y2="409" stroke="#000"/><rect x="935.5" y="391.5" width="4" height="10" fill="#000" stroke="#000"/><line x1="945.5" y1="375" x2="945.5" y2="413" stroke="#000"/><rect x="943.5" y="401.5" width="4" height="7" fill="#000" stroke="#000"/><line x1="953.5" y1="378" x2="953.5" y2="423" stroke="#000"/><rect x="951.5" y="382.5" width="4" height="26" fill="#fff" stroke="#000"/><line x1="961.5" y1="381" x2="961.5" y2="467" stroke="#000"/><rect x="959.5" y="382.5" width="4" height="69" fill="#000" stroke="#000"/><line x1="969.5" y1="441" x2="969.5" y2="518" stroke="#000"/><rect x="967.5" y="452.5" width="4" height="55" fill="#000" stroke="#000"/><line x1="977.5" y1="470" x2="977.5" y2="525" stroke="#000"/><rect x="975.5" y="489.5" width="4" height="18" fill="#fff" stroke="#000"/><line x1="985.5" y1="478" x2="985.5" y2="507" stroke="#000"/><rect x="983.5" y="489.5" width="4" height="9" fill="#000" stroke="#000"/><polyline fill="none" stroke="#ff0000" stroke-width="2" stroke-linejoin="round" points="8.5,633.5 17.5,670.5 145.5,268.5 209.5,437.5 337.5,303.5 409.5,380.5 449.5,138.5 585.5,378.5 673.5,203.5 777.5,373.5 809.5,140.5 977.5,524.5"/><path fill="none" stroke="#0000ff" stroke-width="3" stroke-linejoin="round" d="M8,545 C10.0,544.6 17.1,542.8 20,542.6 C22.9,542.4 23.1,544.3 25.6,543.6 C28.1,542.9 30.3,540.2 35,538.3 C39.7,536.4 49.5,534.0 53.7,532.3 C57.9,530.6 56.7,529.6 60,528.3 C63.3,527.0 69.8,525.6 73.4,524.3 C77.0,523.0 78.6,521.3 81.4,520.3 C84.2,519.3 87.0,520.1 90.1,518.3 C93.2,516.5 96.2,513.3 100.1,509.6 C104.0,505.9 109.0,501.1 113.5,496.2 C118.0,491.3 122.5,486.2 126.9,480.1 C131.3,474.0 135.7,466.5 140,459.4 C144.3,452.3 147.6,447.5 152.5,437.4 C157.4,427.3 164.7,407.2 169.3,399 C173.9,390.8 174.7,393.0 180,388 C185.3,383.0 196.8,372.4 201.4,368.8 C206.0,365.2 202.5,369.6 207.8,366.6 C213.2,363.6 226.7,353.7 233.5,350.6 C240.3,347.5 241.7,347.8 248.4,348 C255.2,348.2 266.9,350.4 274,351.7 C281.1,353.0 284.8,353.9 291.2,356 C297.6,358.1 307.6,362.7 312.6,364.5 C317.6,366.3 316.2,367.3 321.2,366.6 C326.2,365.9 336.9,362.6 342.6,360.2 C348.3,357.8 349.7,354.2 355.4,352.3 C361.1,350.4 370.4,349.7 376.8,348.5 C383.2,347.3 388.2,346.4 393.9,345.2 C399.6,343.9 406.6,342.4 411,341 C415.4,339.6 417.5,337.9 420,336.7 C422.5,335.5 423.1,336.2 426.1,333.9 C429.2,331.5 434.2,327.0 438.3,322.6 C442.4,318.2 446.3,312.7 450.4,307.8 C454.4,302.9 458.5,297.6 462.6,293 C466.7,288.4 470.2,285.1 474.8,280 C479.4,274.9 485.5,267.5 490.4,262.6 C495.3,257.7 499.4,254.0 504.3,250.4 C509.2,246.8 515.4,243.6 520,240.9 C524.6,238.2 527.0,236.5 531.8,234.3 C536.6,232.1 544.0,229.1 548.7,227.8 C553.4,226.5 555.6,226.3 560,226.5 C564.4,226.7 570.6,226.3 574.9,228.7 C579.2,231.1 582.2,237.2 586,241 C589.8,244.8 594.1,248.1 597.4,251.2 C600.7,254.3 602.4,256.2 606,259.5 C609.6,262.8 615.2,267.6 619.3,271.2 C623.4,274.8 626.4,278.2 630.5,281 C634.6,283.8 639.3,285.8 643.7,288 C648.1,290.2 653.6,293.6 657,294.4 C660.4,295.2 660.9,292.8 664.3,292.8 C667.7,292.8 673.0,294.1 677.4,294.6 C681.8,295.1 686.1,296.1 690.5,296 C694.9,295.9 698.7,294.1 703.7,293.7 C708.7,293.2 716.1,294.3 720.5,293.3 C724.9,292.3 725.8,289.1 729.9,287.5 C734.0,285.9 741.1,284.8 745,284 C748.9,283.2 749.0,284.2 753,283 C757.0,281.8 764.6,277.6 769,277 C773.4,276.4 775.4,279.8 779.3,279.7 C783.2,279.6 788.3,278.4 792.4,276.5 C796.5,274.6 799.3,270.5 803.7,268 C808.1,265.5 814.2,263.0 818.6,261.5 C823.0,260.0 826.0,259.4 830,259 C834.0,258.6 837.9,258.7 842.5,259.3 C847.1,259.9 852.4,261.5 857.4,262.7 C862.4,263.9 867.1,264.9 872.4,266.5 C877.7,268.1 884.3,271.4 889.3,272 C894.3,272.6 897.3,271.1 902.4,270.2 C907.5,269.3 915.3,265.6 920,266.8 C924.7,268.0 927.0,273.7 930.5,277.5 C934.0,281.3 936.4,283.9 941,289.8 C945.6,295.7 953.2,305.0 958,312.6 C962.8,320.2 965.4,327.1 970,335.5 C974.6,343.9 983.0,358.6 985.6,363.2"/><g transform="translate(33.5,444.5)"><path d="M0,-4.5 L-5.5,3.8 L0,0.8 Z" fill="#dc143c" fill-opacity="0.8" stroke="#dc143c" stroke-width="0.7" stroke-linejoin="round"/><path d="M0,-4.5 L5.5,3.8 M0,0.8 L3,2" fill="none" stroke="#dc143c" stroke-width="0.9"/></g><g transform="translate(65.5,433.5)"><path d="M0,-4.5 L-5.5,3.8 L0,0.8 Z" fill="#dc143c" fill-opacity="0.8" stroke="#dc143c" stroke-width="0.7" stroke-linejoin="round"/><path d="M0,-4.5 L5.5,3.8 M0,0.8 L3,2" fill="none" stroke="#dc143c" stroke-width="0.9"/></g><g transform="translate(145.5,259.5)"><path d="M0,-4.5 L-5.5,3.8 L0,0.8 Z" fill="#dc143c" fill-opacity="0.8" stroke="#dc143c" stroke-width="0.7" stroke-linejoin="round"/><path d="M0,-4.5 L5.5,3.8 M0,0.8 L3,2" fill="none" stroke="#dc143c" stroke-width="0.9"/></g><g transform="translate(257.5,311.5)"><path d="M0,-4.5 L-5.5,3.8 L0,0.8 Z" fill="#dc143c" fill-opacity="0.8" stroke="#dc143c" stroke-width="0.7" stroke-linejoin="round"/><path d="M0,-4.5 L5.5,3.8 M0,0.8 L3,2" fill="none" stroke="#dc143c" stroke-width="0.9"/></g><g transform="translate(337.5,293.5)"><path d="M0,-4.5 L-5.5,3.8 L0,0.8 Z" fill="#dc143c" fill-opacity="0.8" stroke="#dc143c" stroke-width="0.7" stroke-linejoin="round"/><path d="M0,-4.5 L5.5,3.8 M0,0.8 L3,2" fill="none" stroke="#dc143c" stroke-width="0.9"/></g><g transform="translate(449.5,128.5)"><path d="M0,-4.5 L-5.5,3.8 L0,0.8 Z" fill="#dc143c" fill-opacity="0.8" stroke="#dc143c" stroke-width="0.7" stroke-linejoin="round"/><path d="M0,-4.5 L5.5,3.8 M0,0.8 L3,2" fill="none" stroke="#dc143c" stroke-width="0.9"/></g><g transform="translate(481.5,155.5)"><path d="M0,-4.5 L-5.5,3.8 L0,0.8 Z" fill="#dc143c" fill-opacity="0.8" stroke="#dc143c" stroke-width="0.7" stroke-linejoin="round"/><path d="M0,-4.5 L5.5,3.8 M0,0.8 L3,2" fill="none" stroke="#dc143c" stroke-width="0.9"/></g><g transform="translate(577.5,221.5)"><path d="M0,-4.5 L-5.5,3.8 L0,0.8 Z" fill="#dc143c" fill-opacity="0.8" stroke="#dc143c" stroke-width="0.7" stroke-linejoin="round"/><path d="M0,-4.5 L5.5,3.8 M0,0.8 L3,2" fill="none" stroke="#dc143c" stroke-width="0.9"/></g><g transform="translate(601.5,258.5)"><path d="M0,-4.5 L-5.5,3.8 L0,0.8 Z" fill="#dc143c" fill-opacity="0.8" stroke="#dc143c" stroke-width="0.7" stroke-linejoin="round"/><path d="M0,-4.5 L5.5,3.8 M0,0.8 L3,2" fill="none" stroke="#dc143c" stroke-width="0.9"/></g><g transform="translate(641.5,233.5)"><path d="M0,-4.5 L-5.5,3.8 L0,0.8 Z" fill="#dc143c" fill-opacity="0.8" stroke="#dc143c" stroke-width="0.7" stroke-linejoin="round"/><path d="M0,-4.5 L5.5,3.8 M0,0.8 L3,2" fill="none" stroke="#dc143c" stroke-width="0.9"/></g><g transform="translate(673.5,194.5)"><path d="M0,-4.5 L-5.5,3.8 L0,0.8 Z" fill="#dc143c" fill-opacity="0.8" stroke="#dc143c" stroke-width="0.7" stroke-linejoin="round"/><path d="M0,-4.5 L5.5,3.8 M0,0.8 L3,2" fill="none" stroke="#dc143c" stroke-width="0.9"/></g><g transform="translate(721.5,210.5)"><path d="M0,-4.5 L-5.5,3.8 L0,0.8 Z" fill="#dc143c" fill-opacity="0.8" stroke="#dc143c" stroke-width="0.7" stroke-linejoin="round"/><path d="M0,-4.5 L5.5,3.8 M0,0.8 L3,2" fill="none" stroke="#dc143c" stroke-width="0.9"/></g><g transform="translate(809.5,131.5)"><path d="M0,-4.5 L-5.5,3.8 L0,0.8 Z" fill="#dc143c" fill-opacity="0.8" stroke="#dc143c" stroke-width="0.7" stroke-linejoin="round"/><path d="M0,-4.5 L5.5,3.8 M0,0.8 L3,2" fill="none" stroke="#dc143c" stroke-width="0.9"/></g><g transform="translate(921.5,231.5)"><path d="M0,-4.5 L-5.5,3.8 L0,0.8 Z" fill="#dc143c" fill-opacity="0.8" stroke="#dc143c" stroke-width="0.7" stroke-linejoin="round"/><path d="M0,-4.5 L5.5,3.8 M0,0.8 L3,2" fill="none" stroke="#dc143c" stroke-width="0.9"/></g><g transform="translate(17.5,676.5)"><path d="M0,4.5 L5.5,-3.8 L0,-0.8 Z" fill="#dc143c" fill-opacity="0.8" stroke="#dc143c" stroke-width="0.7" stroke-linejoin="round"/><path d="M0,4.5 L-5.5,-3.8 M0,-0.8 L-3,-2" fill="none" stroke="#dc143c" stroke-width="0.9"/></g><g transform="translate(89.5,492.5)"><path d="M0,4.5 L5.5,-3.8 L0,-0.8 Z" fill="#dc143c" fill-opacity="0.8" stroke="#dc143c" stroke-width="0.7" stroke-linejoin="round"/><path d="M0,4.5 L-5.5,-3.8 M0,-0.8 L-3,-2" fill="none" stroke="#dc143c" stroke-width="0.9"/></g><g transform="translate(137.5,371.5)"><path d="M0,4.5 L5.5,-3.8 L0,-0.8 Z" fill="#dc143c" fill-opacity="0.8" stroke="#dc143c" stroke-width="0.7" stroke-linejoin="round"/><path d="M0,4.5 L-5.5,-3.8 M0,-0.8 L-3,-2" fill="none" stroke="#dc143c" stroke-width="0.9"/></g><g transform="translate(209.5,445.5)"><path d="M0,4.5 L5.5,-3.8 L0,-0.8 Z" fill="#dc143c" fill-opacity="0.8" stroke="#dc143c" stroke-width="0.7" stroke-linejoin="round"/><path d="M0,4.5 L-5.5,-3.8 M0,-0.8 L-3,-2" fill="none" stroke="#dc143c" stroke-width="0.9"/></g><g transform="translate(273.5,420.5)"><path d="M0,4.5 L5.5,-3.8 L0,-0.8 Z" fill="#dc143c" fill-opacity="0.8" stroke="#dc143c" stroke-width="0.7" stroke-linejoin="round"/><path d="M0,4.5 L-5.5,-3.8 M0,-0.8 L-3,-2" fill="none" stroke="#dc143c" stroke-width="0.9"/></g><g transform="translate(305.5,388.5)"><path d="M0,4.5 L5.5,-3.8 L0,-0.8 Z" fill="#dc143c" fill-opacity="0.8" stroke="#dc143c" stroke-width="0.7" stroke-linejoin="round"/><path d="M0,4.5 L-5.5,-3.8 M0,-0.8 L-3,-2" fill="none" stroke="#dc143c" stroke-width="0.9"/></g><g transform="translate(345.5,373.5)"><path d="M0,4.5 L5.5,-3.8 L0,-0.8 Z" fill="#dc143c" fill-opacity="0.8" stroke="#dc143c" stroke-width="0.7" stroke-linejoin="round"/><path d="M0,4.5 L-5.5,-3.8 M0,-0.8 L-3,-2" fill="none" stroke="#dc143c" stroke-width="0.9"/></g><g transform="translate(385.5,372.5)"><path d="M0,4.5 L5.5,-3.8 L0,-0.8 Z" fill="#dc143c" fill-opacity="0.8" stroke="#dc143c" stroke-width="0.7" stroke-linejoin="round"/><path d="M0,4.5 L-5.5,-3.8 M0,-0.8 L-3,-2" fill="none" stroke="#dc143c" stroke-width="0.9"/></g><g transform="translate(409.5,389.5)"><path d="M0,4.5 L5.5,-3.8 L0,-0.8 Z" fill="#dc143c" fill-opacity="0.8" stroke="#dc143c" stroke-width="0.7" stroke-linejoin="round"/><path d="M0,4.5 L-5.5,-3.8 M0,-0.8 L-3,-2" fill="none" stroke="#dc143c" stroke-width="0.9"/></g><g transform="translate(545.5,307.5)"><path d="M0,4.5 L5.5,-3.8 L0,-0.8 Z" fill="#dc143c" fill-opacity="0.8" stroke="#dc143c" stroke-width="0.7" stroke-linejoin="round"/><path d="M0,4.5 L-5.5,-3.8 M0,-0.8 L-3,-2" fill="none" stroke="#dc143c" stroke-width="0.9"/></g><g transform="translate(585.5,386.5)"><path d="M0,4.5 L5.5,-3.8 L0,-0.8 Z" fill="#dc143c" fill-opacity="0.8" stroke="#dc143c" stroke-width="0.7" stroke-linejoin="round"/><path d="M0,4.5 L-5.5,-3.8 M0,-0.8 L-3,-2" fill="none" stroke="#dc143c" stroke-width="0.9"/></g><g transform="translate(625.5,384.5)"><path d="M0,4.5 L5.5,-3.8 L0,-0.8 Z" fill="#dc143c" fill-opacity="0.8" stroke="#dc143c" stroke-width="0.7" stroke-linejoin="round"/><path d="M0,4.5 L-5.5,-3.8 M0,-0.8 L-3,-2" fill="none" stroke="#dc143c" stroke-width="0.9"/></g><g transform="translate(665.5,324.5)"><path d="M0,4.5 L5.5,-3.8 L0,-0.8 Z" fill="#dc143c" fill-opacity="0.8" stroke="#dc143c" stroke-width="0.7" stroke-linejoin="round"/><path d="M0,4.5 L-5.5,-3.8 M0,-0.8 L-3,-2" fill="none" stroke="#dc143c" stroke-width="0.9"/></g><g transform="translate(721.5,309.5)"><path d="M0,4.5 L5.5,-3.8 L0,-0.8 Z" fill="#dc143c" fill-opacity="0.8" stroke="#dc143c" stroke-width="0.7" stroke-linejoin="round"/><path d="M0,4.5 L-5.5,-3.8 M0,-0.8 L-3,-2" fill="none" stroke="#dc143c" stroke-width="0.9"/></g><g transform="translate(753.5,363.5)"><path d="M0,4.5 L5.5,-3.8 L0,-0.8 Z" fill="#dc143c" fill-opacity="0.8" stroke="#dc143c" stroke-width="0.7" stroke-linejoin="round"/><path d="M0,4.5 L-5.5,-3.8 M0,-0.8 L-3,-2" fill="none" stroke="#dc143c" stroke-width="0.9"/></g><g transform="translate(777.5,379.5)"><path d="M0,4.5 L5.5,-3.8 L0,-0.8 Z" fill="#dc143c" fill-opacity="0.8" stroke="#dc143c" stroke-width="0.7" stroke-linejoin="round"/><path d="M0,4.5 L-5.5,-3.8 M0,-0.8 L-3,-2" fill="none" stroke="#dc143c" stroke-width="0.9"/></g><g transform="translate(865.5,371.5)"><path d="M0,4.5 L5.5,-3.8 L0,-0.8 Z" fill="#dc143c" fill-opacity="0.8" stroke="#dc143c" stroke-width="0.7" stroke-linejoin="round"/><path d="M0,4.5 L-5.5,-3.8 M0,-0.8 L-3,-2" fill="none" stroke="#dc143c" stroke-width="0.9"/></g><g transform="translate(929.5,443.5)"><path d="M0,4.5 L5.5,-3.8 L0,-0.8 Z" fill="#dc143c" fill-opacity="0.8" stroke="#dc143c" stroke-width="0.7" stroke-linejoin="round"/><path d="M0,4.5 L-5.5,-3.8 M0,-0.8 L-3,-2" fill="none" stroke="#dc143c" stroke-width="0.9"/></g><line x1="777.5" y1="140" x2="809.5" y2="380" stroke="#ff0000" stroke-dasharray="3 3"/><line x1="777" y1="140.5" x2="1096" y2="140.5" stroke="#ff0000"/><rect x="1082.30" y="129.7" width="13.50" height="10" fill="#fff"/><text x="1095.3" y="137.7" font-size="9.7" fill="#ff0000" stroke="#ff0000" stroke-width="0.22" text-anchor="end" textLength="12.50" lengthAdjust="spacingAndGlyphs">0.0</text><line x1="777" y1="196.5" x2="1096" y2="196.5" stroke="#ff0000"/><rect x="1077.40" y="185.7" width="18.40" height="10" fill="#fff"/><text x="1095.3" y="193.7" font-size="9.7" fill="#ff0000" stroke="#ff0000" stroke-width="0.22" text-anchor="end" textLength="17.40" lengthAdjust="spacingAndGlyphs">23.6</text><line x1="777" y1="231.5" x2="1096" y2="231.5" stroke="#ff0000"/><rect x="1077.40" y="220.7" width="18.40" height="10" fill="#fff"/><text x="1095.3" y="228.7" font-size="9.7" fill="#ff0000" stroke="#ff0000" stroke-width="0.22" text-anchor="end" textLength="17.40" lengthAdjust="spacingAndGlyphs">38.2</text><line x1="777" y1="260.5" x2="1096" y2="260.5" stroke="#ff0000"/><rect x="1077.40" y="249.7" width="18.40" height="10" fill="#fff"/><text x="1095.3" y="257.7" font-size="9.7" fill="#ff0000" stroke="#ff0000" stroke-width="0.22" text-anchor="end" textLength="17.40" lengthAdjust="spacingAndGlyphs">50.0</text><line x1="777" y1="288.5" x2="1096" y2="288.5" stroke="#ff0000"/><rect x="1077.40" y="277.7" width="18.40" height="10" fill="#fff"/><text x="1095.3" y="285.7" font-size="9.7" fill="#ff0000" stroke="#ff0000" stroke-width="0.22" text-anchor="end" textLength="17.40" lengthAdjust="spacingAndGlyphs">61.8</text><line x1="777" y1="380.5" x2="1096" y2="380.5" stroke="#ff0000"/><rect x="1072.80" y="369.7" width="23.00" height="10" fill="#fff"/><text x="1095.3" y="377.7" font-size="9.7" fill="#ff0000" stroke="#ff0000" stroke-width="0.22" text-anchor="end" textLength="22.00" lengthAdjust="spacingAndGlyphs">100.0</text><line x1="777" y1="471.5" x2="1096" y2="471.5" stroke="#ff0000"/><rect x="1072.80" y="460.7" width="23.00" height="10" fill="#fff"/><text x="1095.3" y="468.7" font-size="9.7" fill="#ff0000" stroke="#ff0000" stroke-width="0.22" text-anchor="end" textLength="22.00" lengthAdjust="spacingAndGlyphs">138.2</text><line x1="777" y1="500.5" x2="1096" y2="500.5" stroke="#ff0000"/><rect x="1072.80" y="489.7" width="23.00" height="10" fill="#fff"/><text x="1095.3" y="497.7" font-size="9.7" fill="#ff0000" stroke="#ff0000" stroke-width="0.22" text-anchor="end" textLength="22.00" lengthAdjust="spacingAndGlyphs">150.0</text><line x1="777" y1="528.5" x2="1096" y2="528.5" stroke="#ff0000"/><rect x="1072.80" y="517.7" width="23.00" height="10" fill="#fff"/><text x="1095.3" y="525.7" font-size="9.7" fill="#ff0000" stroke="#ff0000" stroke-width="0.22" text-anchor="end" textLength="22.00" lengthAdjust="spacingAndGlyphs">161.8</text><line x1="777" y1="620.5" x2="1096" y2="620.5" stroke="#ff0000"/><rect x="1072.80" y="609.7" width="23.00" height="10" fill="#fff"/><text x="1095.3" y="617.7" font-size="9.7" fill="#ff0000" stroke="#ff0000" stroke-width="0.22" text-anchor="end" textLength="22.00" lengthAdjust="spacingAndGlyphs">200.0</text><rect x="9" y="380" width="1230" height="2" fill="#0000ff"/><text x="1098.7" y="405.8" font-size="20.5" fill="#ff0000" stroke="#ff0000" stroke-width="0.22" text-anchor="start" textLength="44.30" lengthAdjust="spacingAndGlyphs">цель</text><path d="M1128.5,495 L1137,503.5 L1132.5,503.5 L1132.5,514.5 L1125.5,514.5 L1125.5,503.5 L1120,503.5 Z" fill="none" stroke="#ff0000" stroke-width="1.2"/><rect x="14.50" y="331" width="48.00" height="10" fill="#fff"/><text x="15" y="339" font-size="9.7" fill="#000" stroke="#000" stroke-width="0.22" text-anchor="start" textLength="47.00" lengthAdjust="spacingAndGlyphs">#570085 tp</text><rect x="14.50" y="360.5" width="77.00" height="10" fill="#fff"/><text x="15" y="368.5" font-size="9.7" fill="#000" stroke="#000" stroke-width="0.22" text-anchor="start" textLength="76.00" lengthAdjust="spacingAndGlyphs">#570085 buy 0.20</text><rect x="22" y="112" width="200" height="10" fill="#fff"/><path d="M12,116 L19.5,116 L15.75,120 Z" fill="#000"/><text x="24" y="121" font-size="9.7" fill="#000" stroke="#000" stroke-width="0.22" text-anchor="start" textLength="50.00" lengthAdjust="spacingAndGlyphs">GBPJPY,H4</text><text x="80.5" y="121" font-size="9.7" fill="#000" stroke="#000" stroke-width="0.22" text-anchor="start" textLength="31.60" lengthAdjust="spacingAndGlyphs">156.115</text><text x="118.6" y="121" font-size="9.7" fill="#000" stroke="#000" stroke-width="0.22" text-anchor="start" textLength="31.60" lengthAdjust="spacingAndGlyphs">156.244</text><text x="152.6" y="121" font-size="9.7" fill="#000" stroke="#000" stroke-width="0.22" text-anchor="start" textLength="31.60" lengthAdjust="spacingAndGlyphs">155.938</text><text x="188.5" y="121" font-size="9.7" fill="#000" stroke="#000" stroke-width="0.22" text-anchor="start" textLength="31.60" lengthAdjust="spacingAndGlyphs">156.019</text><path d="M987,110 L996,110 L991.5,115 Z" fill="#708090"/><rect x="8.5" y="109.5" width="1231" height="574" fill="none" stroke="#000"/><line x1="1240" y1="119.5" x2="1242" y2="119.5" stroke="#000"/><text x="1245.6" y="122.0" font-size="9.7" fill="#000" stroke="#000" stroke-width="0.22" text-anchor="start" textLength="31.50" lengthAdjust="spacingAndGlyphs">160.190</text><line x1="1240" y1="152.5" x2="1242" y2="152.5" stroke="#000"/><text x="1245.6" y="155.0" font-size="9.7" fill="#000" stroke="#000" stroke-width="0.22" text-anchor="start" textLength="31.50" lengthAdjust="spacingAndGlyphs">159.820</text><line x1="1240" y1="185.5" x2="1242" y2="185.5" stroke="#000"/><text x="1245.6" y="188.0" font-size="9.7" fill="#000" stroke="#000" stroke-width="0.22" text-anchor="start" textLength="31.50" lengthAdjust="spacingAndGlyphs">159.460</text><line x1="1240" y1="218.5" x2="1242" y2="218.5" stroke="#000"/><text x="1245.6" y="221.0" font-size="9.7" fill="#000" stroke="#000" stroke-width="0.22" text-anchor="start" textLength="31.50" lengthAdjust="spacingAndGlyphs">159.100</text><line x1="1240" y1="251.5" x2="1242" y2="251.5" stroke="#000"/><text x="1245.6" y="254.0" font-size="9.7" fill="#000" stroke="#000" stroke-width="0.22" text-anchor="start" textLength="31.50" lengthAdjust="spacingAndGlyphs">158.730</text><line x1="1240" y1="284.5" x2="1242" y2="284.5" stroke="#000"/><text x="1245.6" y="287.0" font-size="9.7" fill="#000" stroke="#000" stroke-width="0.22" text-anchor="start" textLength="31.50" lengthAdjust="spacingAndGlyphs">158.370</text><line x1="1240" y1="317.5" x2="1242" y2="317.5" stroke="#000"/><text x="1245.6" y="320.0" font-size="9.7" fill="#000" stroke="#000" stroke-width="0.22" text-anchor="start" textLength="31.50" lengthAdjust="spacingAndGlyphs">158.010</text><line x1="1240" y1="350.5" x2="1242" y2="350.5" stroke="#000"/><text x="1245.6" y="353.0" font-size="9.7" fill="#000" stroke="#000" stroke-width="0.22" text-anchor="start" textLength="31.50" lengthAdjust="spacingAndGlyphs">157.650</text><line x1="1240" y1="383.5" x2="1242" y2="383.5" stroke="#000"/><line x1="1240" y1="416.5" x2="1242" y2="416.5" stroke="#000"/><text x="1245.6" y="419.0" font-size="9.7" fill="#000" stroke="#000" stroke-width="0.22" text-anchor="start" textLength="31.50" lengthAdjust="spacingAndGlyphs">156.920</text><line x1="1240" y1="449.5" x2="1242" y2="449.5" stroke="#000"/><text x="1245.6" y="452.0" font-size="9.7" fill="#000" stroke="#000" stroke-width="0.22" text-anchor="start" textLength="31.50" lengthAdjust="spacingAndGlyphs">156.560</text><line x1="1240" y1="482.5" x2="1242" y2="482.5" stroke="#000"/><text x="1245.6" y="485.0" font-size="9.7" fill="#000" stroke="#000" stroke-width="0.22" text-anchor="start" textLength="31.50" lengthAdjust="spacingAndGlyphs">156.190</text><line x1="1240" y1="515.5" x2="1242" y2="515.5" stroke="#000"/><text x="1245.6" y="518.0" font-size="9.7" fill="#000" stroke="#000" stroke-width="0.22" text-anchor="start" textLength="31.50" lengthAdjust="spacingAndGlyphs">155.830</text><line x1="1240" y1="548.5" x2="1242" y2="548.5" stroke="#000"/><text x="1245.6" y="551.0" font-size="9.7" fill="#000" stroke="#000" stroke-width="0.22" text-anchor="start" textLength="31.50" lengthAdjust="spacingAndGlyphs">155.470</text><line x1="1240" y1="581.5" x2="1242" y2="581.5" stroke="#000"/><text x="1245.6" y="584.0" font-size="9.7" fill="#000" stroke="#000" stroke-width="0.22" text-anchor="start" textLength="31.50" lengthAdjust="spacingAndGlyphs">155.110</text><line x1="1240" y1="614.5" x2="1242" y2="614.5" stroke="#000"/><text x="1245.6" y="617.0" font-size="9.7" fill="#000" stroke="#000" stroke-width="0.22" text-anchor="start" textLength="31.50" lengthAdjust="spacingAndGlyphs">154.740</text><line x1="1240" y1="647.5" x2="1242" y2="647.5" stroke="#000"/><text x="1245.6" y="650.0" font-size="9.7" fill="#000" stroke="#000" stroke-width="0.22" text-anchor="start" textLength="31.50" lengthAdjust="spacingAndGlyphs">154.380</text><line x1="1240" y1="680.5" x2="1242" y2="680.5" stroke="#000"/><text x="1245.6" y="683.0" font-size="9.7" fill="#000" stroke="#000" stroke-width="0.22" text-anchor="start" textLength="31.50" lengthAdjust="spacingAndGlyphs">154.020</text><rect x="1242" y="375" width="39" height="11" fill="#0000ff"/><text x="1245.6" y="384" font-size="9.7" fill="#fff" stroke="#fff" stroke-width="0.22" text-anchor="start" textLength="31.50" lengthAdjust="spacingAndGlyphs">157.305</text><rect x="1242" y="492" width="39" height="11" fill="#000"/><text x="1245.6" y="501" font-size="9.7" fill="#fff" stroke="#fff" stroke-width="0.22" text-anchor="start" textLength="31.50" lengthAdjust="spacingAndGlyphs">156.019</text><line x1="9.5" y1="684" x2="9.5" y2="687" stroke="#000"/><text x="9" y="695.8" font-size="9.7" fill="#000" stroke="#000" stroke-width="0.22" text-anchor="start" textLength="45.55" lengthAdjust="spacingAndGlyphs">6 Sep 2013</text><line x1="73.5" y1="684" x2="73.5" y2="687" stroke="#000"/><text x="73" y="695.8" font-size="9.7" fill="#000" stroke="#000" stroke-width="0.22" text-anchor="start" textLength="48.03" lengthAdjust="spacingAndGlyphs">9 Sep 20:00</text><line x1="137.5" y1="684" x2="137.5" y2="687" stroke="#000"/><text x="137" y="695.8" font-size="9.7" fill="#000" stroke="#000" stroke-width="0.22" text-anchor="start" textLength="52.32" lengthAdjust="spacingAndGlyphs">11 Sep 04:00</text><line x1="201.5" y1="684" x2="201.5" y2="687" stroke="#000"/><text x="201" y="695.8" font-size="9.7" fill="#000" stroke="#000" stroke-width="0.22" text-anchor="start" textLength="52.98" lengthAdjust="spacingAndGlyphs">12 Sep 12:00</text><line x1="265.5" y1="684" x2="265.5" y2="687" stroke="#000"/><text x="265" y="695.8" font-size="9.7" fill="#000" stroke="#000" stroke-width="0.22" text-anchor="start" textLength="52.98" lengthAdjust="spacingAndGlyphs">13 Sep 20:00</text><line x1="329.5" y1="684" x2="329.5" y2="687" stroke="#000"/><text x="329" y="695.8" font-size="9.7" fill="#000" stroke="#000" stroke-width="0.22" text-anchor="start" textLength="52.98" lengthAdjust="spacingAndGlyphs">17 Sep 04:00</text><line x1="393.5" y1="684" x2="393.5" y2="687" stroke="#000"/><text x="393" y="695.8" font-size="9.7" fill="#000" stroke="#000" stroke-width="0.22" text-anchor="start" textLength="52.98" lengthAdjust="spacingAndGlyphs">18 Sep 12:00</text><line x1="457.5" y1="684" x2="457.5" y2="687" stroke="#000"/><text x="457" y="695.8" font-size="9.7" fill="#000" stroke="#000" stroke-width="0.22" text-anchor="start" textLength="52.98" lengthAdjust="spacingAndGlyphs">19 Sep 20:00</text><line x1="521.5" y1="684" x2="521.5" y2="687" stroke="#000"/><text x="521" y="695.8" font-size="9.7" fill="#000" stroke="#000" stroke-width="0.22" text-anchor="start" textLength="52.98" lengthAdjust="spacingAndGlyphs">23 Sep 04:00</text><line x1="585.5" y1="684" x2="585.5" y2="687" stroke="#000"/><text x="585" y="695.8" font-size="9.7" fill="#000" stroke="#000" stroke-width="0.22" text-anchor="start" textLength="52.98" lengthAdjust="spacingAndGlyphs">24 Sep 12:00</text><line x1="649.5" y1="684" x2="649.5" y2="687" stroke="#000"/><text x="649" y="695.8" font-size="9.7" fill="#000" stroke="#000" stroke-width="0.22" text-anchor="start" textLength="52.98" lengthAdjust="spacingAndGlyphs">25 Sep 20:00</text><line x1="713.5" y1="684" x2="713.5" y2="687" stroke="#000"/><text x="713" y="695.8" font-size="9.7" fill="#000" stroke="#000" stroke-width="0.22" text-anchor="start" textLength="52.98" lengthAdjust="spacingAndGlyphs">27 Sep 04:00</text><line x1="777.5" y1="684" x2="777.5" y2="687" stroke="#000"/><text x="777" y="695.8" font-size="9.7" fill="#000" stroke="#000" stroke-width="0.22" text-anchor="start" textLength="52.98" lengthAdjust="spacingAndGlyphs">30 Sep 12:00</text><line x1="841.5" y1="684" x2="841.5" y2="687" stroke="#000"/><text x="841" y="695.8" font-size="9.7" fill="#000" stroke="#000" stroke-width="0.22" text-anchor="start" textLength="46.04" lengthAdjust="spacingAndGlyphs">1 Oct 20:00</text><line x1="905.5" y1="684" x2="905.5" y2="687" stroke="#000"/><text x="905" y="695.8" font-size="9.7" fill="#000" stroke="#000" stroke-width="0.22" text-anchor="start" textLength="46.04" lengthAdjust="spacingAndGlyphs">3 Oct 04:00</text><line x1="969.5" y1="684" x2="969.5" y2="687" stroke="#000"/><text x="969" y="695.8" font-size="9.7" fill="#000" stroke="#000" stroke-width="0.22" text-anchor="start" textLength="46.04" lengthAdjust="spacingAndGlyphs">4 Oct 12:00</text></g></svg>
<div class="a" style="left:4px;top:703px;width:1280px;height:1px;background:#000"></div>
<div class="a" style="left:4px;top:704px;width:1280px;height:18px;background:#dfdfdf"></div>
<div class="a" style="left:4px;top:722px;width:1280px;height:1px;background:#f8f8f8"></div>
<div class="a" style="left:4px;top:704px;width:2px;height:18px;background:#8a8a80"></div>
<div class="a" style="left:244px;top:703px;width:76px;height:19px;background:#fff;border-left:1px solid #000;border-right:1px solid #000;border-bottom:1px solid #000"></div>
<div class="t" style="left:18.6px;top:706.23px;font-size:11.3px;line-height:11.3px;color:#6e6c60;font-weight:normal;transform:scaleX(0.8637);transform-origin:0 0;">EURUSD,H4</div>
<div class="t" style="left:99.5px;top:706.23px;font-size:11.3px;line-height:11.3px;color:#6e6c60;font-weight:normal;transform:scaleX(0.8575);transform-origin:0 0;">GBPUSD,H4</div>
<div class="t" style="left:178.4px;top:706.23px;font-size:11.3px;line-height:11.3px;color:#6e6c60;font-weight:normal;transform:scaleX(0.8895);transform-origin:0 0;">EURJPY,H4</div>
<div class="t" style="left:330.4px;top:706.23px;font-size:11.3px;line-height:11.3px;color:#6e6c60;font-weight:normal;transform:scaleX(0.8882);transform-origin:0 0;">AUDUSD,H4</div>
<div class="t" style="left:410.7px;top:706.23px;font-size:11.3px;line-height:11.3px;color:#6e6c60;font-weight:normal;transform:scaleX(0.8814);transform-origin:0 0;">NZDUSD,H4</div>
<div class="t" style="left:489px;top:706.23px;font-size:11.3px;line-height:11.3px;color:#6e6c60;font-weight:normal;transform:scaleX(0.9044);transform-origin:0 0;">USDCHF,Daily</div>
<div class="t" style="left:578.4px;top:706.23px;font-size:11.3px;line-height:11.3px;color:#6e6c60;font-weight:normal;transform:scaleX(0.8895);transform-origin:0 0;">USDJPY,H4</div>
<div class="t" style="left:655.4px;top:706.23px;font-size:11.3px;line-height:11.3px;color:#6e6c60;font-weight:normal;transform:scaleX(0.8951);transform-origin:0 0;">USDCAD,Daily</div>
<div class="t" style="left:747.3px;top:706.23px;font-size:11.3px;line-height:11.3px;color:#6e6c60;font-weight:normal;transform:scaleX(0.8830);transform-origin:0 0;">GBPCHF,H4</div>
<div class="t" style="left:827.6px;top:706.23px;font-size:11.3px;line-height:11.3px;color:#6e6c60;font-weight:normal;transform:scaleX(0.9026);transform-origin:0 0;">AUDNZD,Daily</div>
<div class="t" style="left:919px;top:706.23px;font-size:11.3px;line-height:11.3px;color:#6e6c60;font-weight:normal;transform:scaleX(0.8789);transform-origin:0 0;">CHFJPY,H4</div>
<div class="t" style="left:255px;top:706.23px;font-size:11.3px;line-height:11.3px;color:#000;font-weight:normal;transform:scaleX(0.8564);transform-origin:0 0;">GBPJPY,H4</div>
<div class="a" style="left:88px;top:707px;width:1px;height:12px;background:#6e6c60"></div>
<div class="a" style="left:168px;top:707px;width:1px;height:12px;background:#6e6c60"></div>
<div class="a" style="left:400px;top:707px;width:1px;height:12px;background:#6e6c60"></div>
<div class="a" style="left:480px;top:707px;width:1px;height:12px;background:#6e6c60"></div>
<div class="a" style="left:568px;top:707px;width:1px;height:12px;background:#6e6c60"></div>
<div class="a" style="left:644px;top:707px;width:1px;height:12px;background:#6e6c60"></div>
<div class="a" style="left:736px;top:707px;width:1px;height:12px;background:#6e6c60"></div>
<div class="a" style="left:816px;top:707px;width:1px;height:12px;background:#6e6c60"></div>
<div class="a" style="left:908px;top:707px;width:1px;height:12px;background:#6e6c60"></div>
<div class="a" style="left:984px;top:707px;width:1px;height:12px;background:#6e6c60"></div>
<svg class="a" style="left:1250px;top:707px" width="30" height="12" viewBox="0 0 30 12"><path d="M9,2 L9,10 L5,6 Z M21,2 L21,10 L25,6 Z" fill="#9a9a9a"/></svg>
<div class="a" style="left:4px;top:723px;width:1280px;height:21px;background:#dfdfdf"></div>
<div class="t" style="left:5.7px;top:730.12px;font-size:11.2px;line-height:11.2px;color:#000;font-weight:normal;transform:scaleX(0.9718);transform-origin:0 0;">Для справки, нажмите F1</div>
<div class="a" style="left:563px;top:727px;width:1px;height:16px;background:#9a9a9a"></div>
<div class="a" style="left:564px;top:727px;width:1px;height:16px;background:#fafafa"></div>
<div class="a" style="left:672px;top:727px;width:1px;height:16px;background:#9a9a9a"></div>
<div class="a" style="left:673px;top:727px;width:1px;height:16px;background:#fafafa"></div>
<div class="a" style="left:773px;top:727px;width:1px;height:16px;background:#9a9a9a"></div>
<div class="a" style="left:774px;top:727px;width:1px;height:16px;background:#fafafa"></div>
<div class="a" style="left:845px;top:727px;width:1px;height:16px;background:#9a9a9a"></div>
<div class="a" style="left:846px;top:727px;width:1px;height:16px;background:#fafafa"></div>
<div class="a" style="left:916px;top:727px;width:1px;height:16px;background:#9a9a9a"></div>
<div class="a" style="left:917px;top:727px;width:1px;height:16px;background:#fafafa"></div>
<div class="a" style="left:985px;top:727px;width:1px;height:16px;background:#9a9a9a"></div>
<div class="a" style="left:986px;top:727px;width:1px;height:16px;background:#fafafa"></div>
<div class="a" style="left:1056px;top:727px;width:1px;height:16px;background:#9a9a9a"></div>
<div class="a" style="left:1057px;top:727px;width:1px;height:16px;background:#fafafa"></div>
<div class="a" style="left:1122px;top:727px;width:1px;height:16px;background:#9a9a9a"></div>
<div class="a" style="left:1123px;top:727px;width:1px;height:16px;background:#fafafa"></div>
<svg class="a" style="left:1128px;top:729px" width="24" height="12" viewBox="0 0 24 12"><rect x="0" y="0" width="2" height="9" fill="#5a8010"/><rect x="0" y="10" width="2" height="2" fill="#b01010"/><rect x="3" y="0" width="2" height="8" fill="#5a8010"/><rect x="3" y="9" width="2" height="3" fill="#b01010"/><rect x="6" y="0" width="2" height="6" fill="#5a8010"/><rect x="6" y="7" width="2" height="5" fill="#b01010"/><rect x="9" y="0" width="2" height="5" fill="#5a8010"/><rect x="9" y="6" width="2" height="6" fill="#b01010"/><rect x="12" y="0" width="2" height="4" fill="#5a8010"/><rect x="12" y="5" width="2" height="7" fill="#b01010"/><rect x="15" y="0" width="2" height="3" fill="#5a8010"/><rect x="15" y="4" width="2" height="8" fill="#b01010"/><rect x="18" y="0" width="2" height="1" fill="#5a8010"/><rect x="18" y="2" width="2" height="10" fill="#b01010"/><rect x="21" y="0" width="2" height="0" fill="#5a8010"/><rect x="21" y="1" width="2" height="11" fill="#b01010"/></svg>
<div class="t" style="left:1182.3px;top:730.12px;font-size:11.2px;line-height:11.2px;color:#000;font-weight:normal;transform:scaleX(0.9472);transform-origin:0 0;">18/1 kb</div>
<svg class="a" style="left:1266px;top:728px" width="16" height="16" viewBox="0 0 16 16"><path d="M15,1 L1,15 M15,5 L5,15 M15,9 L9,15 M15,13 L13,15" stroke="#a8a8a8" stroke-width="1.2"/><path d="M15,2 L2,15 M15,6 L6,15 M15,10 L10,15" stroke="#fff" stroke-width="0.8"/></svg>
<div class="a" style="left:4px;top:744px;width:1280px;height:1px;background:#606060"></div>
<div class="a" style="left:4px;top:745px;width:1280px;height:3px;background:#8a8b8e"></div>
<svg class="a" style="left:4px;top:744px" width="44" height="4" viewBox="0 0 44 4"><path d="M0,0 L40,0 L44,4 L0,4 Z" fill="#f09030"/><rect x="0" y="0" width="41" height="1" fill="#c86010"/></svg></div></body></html>
